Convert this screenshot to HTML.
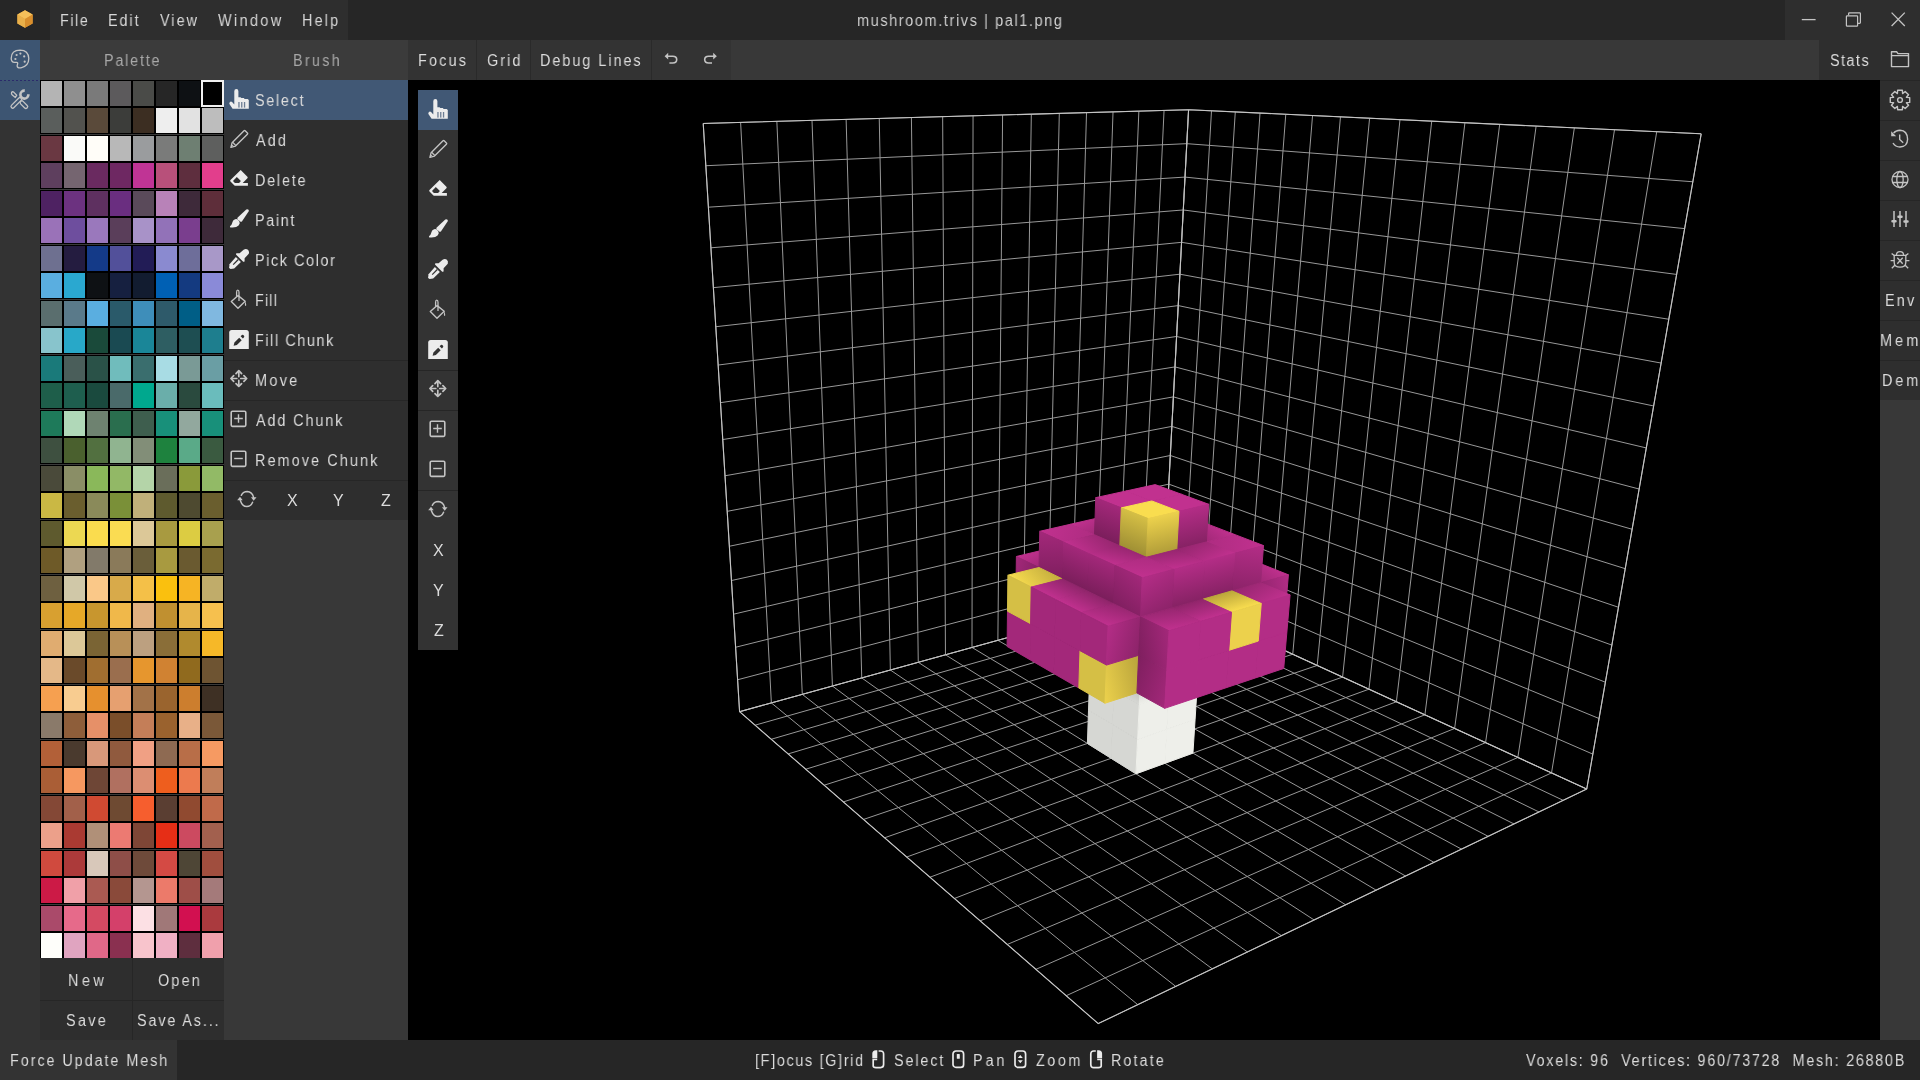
<!DOCTYPE html><html><head><meta charset="utf-8"><style>
html,body{margin:0;padding:0;width:1920px;height:1080px;overflow:hidden;background:#262626}
.t{position:absolute;font-family:"Liberation Sans",sans-serif;white-space:nowrap;will-change:transform}
.s{transform:scaleX(0.9);transform-origin:0 0;will-change:transform}
</style></head><body>
<div style="position:absolute;left:0px;top:0px;width:1920px;height:1080px;background:#262626;"></div>
<div style="position:absolute;left:50px;top:0px;width:298px;height:40px;background:#2e2e2e;"></div>
<div style="position:absolute;left:1785px;top:0px;width:135px;height:40px;background:#2e2e2e;"></div>
<div style="position:absolute;left:0px;top:40px;width:40px;height:1000px;background:#333333;"></div>
<div style="position:absolute;left:0px;top:40px;width:40px;height:80px;background:#3d5572;"></div>
<div style="position:absolute;left:0px;top:79.5px;width:40px;height:1px;background:repeating-linear-gradient(90deg,#2a2a6a 0 2px,transparent 2px 4px);"></div>
<div style="position:absolute;left:40px;top:40px;width:368px;height:40px;background:#3b3b3b;"></div>
<div style="position:absolute;left:408px;top:40px;width:1411px;height:40px;background:#333333;"></div>
<div style="position:absolute;left:731px;top:40px;width:1088px;height:40px;background:#383838;"></div>
<div style="position:absolute;left:1819px;top:40px;width:101px;height:40px;background:#2e2e2e;"></div>
<div style="position:absolute;left:40px;top:80px;width:184px;height:878px;background:#000000;"></div>
<div style="position:absolute;left:40px;top:958px;width:184px;height:82px;background:#2e2e2e;"></div>
<div style="position:absolute;left:224px;top:80px;width:184px;height:960px;background:#383838;"></div>
<div style="position:absolute;left:224px;top:80px;width:184px;height:440px;background:#2e2e2e;"></div>
<div style="position:absolute;left:224px;top:80px;width:184px;height:40px;background:#415875;"></div>
<div style="position:absolute;left:408px;top:80px;width:1472px;height:960px;background:#000000;"></div>
<div style="position:absolute;left:1880px;top:80px;width:40px;height:960px;background:#383838;"></div>
<div style="position:absolute;left:1880px;top:80px;width:40px;height:320px;background:#2e2e2e;"></div>
<div style="position:absolute;left:1880px;top:80px;width:40px;height:1px;background:#262626;"></div>
<div style="position:absolute;left:0px;top:1040px;width:1920px;height:40px;background:#262626;"></div>
<div style="position:absolute;left:0px;top:1040px;width:177px;height:40px;background:#333333;"></div>
<div style="position:absolute;left:41px;top:81px;width:21px;height:25px;background:#b4b4b4;"></div>
<div style="position:absolute;left:64px;top:81px;width:21px;height:25px;background:#8f8f8f;"></div>
<div style="position:absolute;left:87px;top:81px;width:21px;height:25px;background:#7a7a7a;"></div>
<div style="position:absolute;left:110px;top:81px;width:21px;height:25px;background:#5c5a5c;"></div>
<div style="position:absolute;left:133px;top:81px;width:21px;height:25px;background:#4a4b48;"></div>
<div style="position:absolute;left:156px;top:81px;width:21px;height:25px;background:#262626;"></div>
<div style="position:absolute;left:179px;top:81px;width:21px;height:25px;background:#0e1114;"></div>
<div style="position:absolute;left:202px;top:81px;width:21px;height:25px;background:#000000;"></div>
<div style="position:absolute;left:40px;top:134px;width:184px;height:1px;background:#3a3a3a;"></div>
<div style="position:absolute;left:41px;top:108px;width:21px;height:25px;background:#5a5e5c;"></div>
<div style="position:absolute;left:64px;top:108px;width:21px;height:25px;background:#52524e;"></div>
<div style="position:absolute;left:87px;top:108px;width:21px;height:25px;background:#5a4a3a;"></div>
<div style="position:absolute;left:110px;top:108px;width:21px;height:25px;background:#3c3d3a;"></div>
<div style="position:absolute;left:133px;top:108px;width:21px;height:25px;background:#3c2e22;"></div>
<div style="position:absolute;left:156px;top:108px;width:21px;height:25px;background:#eeeeee;"></div>
<div style="position:absolute;left:179px;top:108px;width:21px;height:25px;background:#e2e2e2;"></div>
<div style="position:absolute;left:202px;top:108px;width:21px;height:25px;background:#bdbdbd;"></div>
<div style="position:absolute;left:41px;top:136px;width:21px;height:25px;background:#6a3842;"></div>
<div style="position:absolute;left:64px;top:136px;width:21px;height:25px;background:#fafaf8;"></div>
<div style="position:absolute;left:87px;top:136px;width:21px;height:25px;background:#fffdf8;"></div>
<div style="position:absolute;left:110px;top:136px;width:21px;height:25px;background:#b8b8b8;"></div>
<div style="position:absolute;left:133px;top:136px;width:21px;height:25px;background:#9a9c9e;"></div>
<div style="position:absolute;left:156px;top:136px;width:21px;height:25px;background:#7a7b7a;"></div>
<div style="position:absolute;left:179px;top:136px;width:21px;height:25px;background:#6e7f72;"></div>
<div style="position:absolute;left:202px;top:136px;width:21px;height:25px;background:#5e5f5e;"></div>
<div style="position:absolute;left:40px;top:189px;width:184px;height:1px;background:#3a3a3a;"></div>
<div style="position:absolute;left:41px;top:163px;width:21px;height:25px;background:#5e3f5e;"></div>
<div style="position:absolute;left:64px;top:163px;width:21px;height:25px;background:#756570;"></div>
<div style="position:absolute;left:87px;top:163px;width:21px;height:25px;background:#6a2a60;"></div>
<div style="position:absolute;left:110px;top:163px;width:21px;height:25px;background:#6e2862;"></div>
<div style="position:absolute;left:133px;top:163px;width:21px;height:25px;background:#c03495;"></div>
<div style="position:absolute;left:156px;top:163px;width:21px;height:25px;background:#b8507a;"></div>
<div style="position:absolute;left:179px;top:163px;width:21px;height:25px;background:#5e2e3e;"></div>
<div style="position:absolute;left:202px;top:163px;width:21px;height:25px;background:#e23e8c;"></div>
<div style="position:absolute;left:41px;top:191px;width:21px;height:25px;background:#4e2262;"></div>
<div style="position:absolute;left:64px;top:191px;width:21px;height:25px;background:#6c3280;"></div>
<div style="position:absolute;left:87px;top:191px;width:21px;height:25px;background:#5e3060;"></div>
<div style="position:absolute;left:110px;top:191px;width:21px;height:25px;background:#6a2e80;"></div>
<div style="position:absolute;left:133px;top:191px;width:21px;height:25px;background:#5a4a5a;"></div>
<div style="position:absolute;left:156px;top:191px;width:21px;height:25px;background:#b882b8;"></div>
<div style="position:absolute;left:179px;top:191px;width:21px;height:25px;background:#3e2a3a;"></div>
<div style="position:absolute;left:202px;top:191px;width:21px;height:25px;background:#5e2e3a;"></div>
<div style="position:absolute;left:40px;top:244px;width:184px;height:1px;background:#3a3a3a;"></div>
<div style="position:absolute;left:41px;top:218px;width:21px;height:25px;background:#9a72b8;"></div>
<div style="position:absolute;left:64px;top:218px;width:21px;height:25px;background:#6e4e9e;"></div>
<div style="position:absolute;left:87px;top:218px;width:21px;height:25px;background:#9a78bc;"></div>
<div style="position:absolute;left:110px;top:218px;width:21px;height:25px;background:#5a3e5a;"></div>
<div style="position:absolute;left:133px;top:218px;width:21px;height:25px;background:#a892c8;"></div>
<div style="position:absolute;left:156px;top:218px;width:21px;height:25px;background:#9272b8;"></div>
<div style="position:absolute;left:179px;top:218px;width:21px;height:25px;background:#7a3e8e;"></div>
<div style="position:absolute;left:202px;top:218px;width:21px;height:25px;background:#3e2a3a;"></div>
<div style="position:absolute;left:41px;top:246px;width:21px;height:25px;background:#6e7090;"></div>
<div style="position:absolute;left:64px;top:246px;width:21px;height:25px;background:#241c40;"></div>
<div style="position:absolute;left:87px;top:246px;width:21px;height:25px;background:#143a88;"></div>
<div style="position:absolute;left:110px;top:246px;width:21px;height:25px;background:#52509a;"></div>
<div style="position:absolute;left:133px;top:246px;width:21px;height:25px;background:#221c56;"></div>
<div style="position:absolute;left:156px;top:246px;width:21px;height:25px;background:#8a8ad0;"></div>
<div style="position:absolute;left:179px;top:246px;width:21px;height:25px;background:#6e6e9a;"></div>
<div style="position:absolute;left:202px;top:246px;width:21px;height:25px;background:#a898c8;"></div>
<div style="position:absolute;left:40px;top:299px;width:184px;height:1px;background:#3a3a3a;"></div>
<div style="position:absolute;left:41px;top:273px;width:21px;height:25px;background:#5aaee0;"></div>
<div style="position:absolute;left:64px;top:273px;width:21px;height:25px;background:#2aa8d0;"></div>
<div style="position:absolute;left:87px;top:273px;width:21px;height:25px;background:#0e1114;"></div>
<div style="position:absolute;left:110px;top:273px;width:21px;height:25px;background:#162040;"></div>
<div style="position:absolute;left:133px;top:273px;width:21px;height:25px;background:#121c30;"></div>
<div style="position:absolute;left:156px;top:273px;width:21px;height:25px;background:#0060b4;"></div>
<div style="position:absolute;left:179px;top:273px;width:21px;height:25px;background:#143a80;"></div>
<div style="position:absolute;left:202px;top:273px;width:21px;height:25px;background:#8a8ad8;"></div>
<div style="position:absolute;left:41px;top:301px;width:21px;height:25px;background:#5a6e6e;"></div>
<div style="position:absolute;left:64px;top:301px;width:21px;height:25px;background:#5a7a8a;"></div>
<div style="position:absolute;left:87px;top:301px;width:21px;height:25px;background:#5aaee0;"></div>
<div style="position:absolute;left:110px;top:301px;width:21px;height:25px;background:#2a5a6a;"></div>
<div style="position:absolute;left:133px;top:301px;width:21px;height:25px;background:#3e8eba;"></div>
<div style="position:absolute;left:156px;top:301px;width:21px;height:25px;background:#2e5a6a;"></div>
<div style="position:absolute;left:179px;top:301px;width:21px;height:25px;background:#005e86;"></div>
<div style="position:absolute;left:202px;top:301px;width:21px;height:25px;background:#80b8e0;"></div>
<div style="position:absolute;left:40px;top:354px;width:184px;height:1px;background:#3a3a3a;"></div>
<div style="position:absolute;left:41px;top:328px;width:21px;height:25px;background:#88c4cc;"></div>
<div style="position:absolute;left:64px;top:328px;width:21px;height:25px;background:#28a8c8;"></div>
<div style="position:absolute;left:87px;top:328px;width:21px;height:25px;background:#1a4a3a;"></div>
<div style="position:absolute;left:110px;top:328px;width:21px;height:25px;background:#1a4a52;"></div>
<div style="position:absolute;left:133px;top:328px;width:21px;height:25px;background:#1a8698;"></div>
<div style="position:absolute;left:156px;top:328px;width:21px;height:25px;background:#2e5e62;"></div>
<div style="position:absolute;left:179px;top:328px;width:21px;height:25px;background:#1e4e52;"></div>
<div style="position:absolute;left:202px;top:328px;width:21px;height:25px;background:#1e7e8e;"></div>
<div style="position:absolute;left:41px;top:356px;width:21px;height:25px;background:#1a7a7a;"></div>
<div style="position:absolute;left:64px;top:356px;width:21px;height:25px;background:#4a5e5a;"></div>
<div style="position:absolute;left:87px;top:356px;width:21px;height:25px;background:#2a5248;"></div>
<div style="position:absolute;left:110px;top:356px;width:21px;height:25px;background:#70bcbc;"></div>
<div style="position:absolute;left:133px;top:356px;width:21px;height:25px;background:#3a6e6e;"></div>
<div style="position:absolute;left:156px;top:356px;width:21px;height:25px;background:#a8dce4;"></div>
<div style="position:absolute;left:179px;top:356px;width:21px;height:25px;background:#7a9a96;"></div>
<div style="position:absolute;left:202px;top:356px;width:21px;height:25px;background:#6a9ea4;"></div>
<div style="position:absolute;left:40px;top:409px;width:184px;height:1px;background:#3a3a3a;"></div>
<div style="position:absolute;left:41px;top:383px;width:21px;height:25px;background:#1e5e4a;"></div>
<div style="position:absolute;left:64px;top:383px;width:21px;height:25px;background:#1e5e4e;"></div>
<div style="position:absolute;left:87px;top:383px;width:21px;height:25px;background:#1a4a3e;"></div>
<div style="position:absolute;left:110px;top:383px;width:21px;height:25px;background:#4a6a6a;"></div>
<div style="position:absolute;left:133px;top:383px;width:21px;height:25px;background:#00a88e;"></div>
<div style="position:absolute;left:156px;top:383px;width:21px;height:25px;background:#6aaeaa;"></div>
<div style="position:absolute;left:179px;top:383px;width:21px;height:25px;background:#2a4a3e;"></div>
<div style="position:absolute;left:202px;top:383px;width:21px;height:25px;background:#6abcbc;"></div>
<div style="position:absolute;left:41px;top:411px;width:21px;height:25px;background:#1e7a5a;"></div>
<div style="position:absolute;left:64px;top:411px;width:21px;height:25px;background:#b0d8b8;"></div>
<div style="position:absolute;left:87px;top:411px;width:21px;height:25px;background:#6e8270;"></div>
<div style="position:absolute;left:110px;top:411px;width:21px;height:25px;background:#2a6e4e;"></div>
<div style="position:absolute;left:133px;top:411px;width:21px;height:25px;background:#3e5e4e;"></div>
<div style="position:absolute;left:156px;top:411px;width:21px;height:25px;background:#18907a;"></div>
<div style="position:absolute;left:179px;top:411px;width:21px;height:25px;background:#92a89e;"></div>
<div style="position:absolute;left:202px;top:411px;width:21px;height:25px;background:#18907a;"></div>
<div style="position:absolute;left:40px;top:464px;width:184px;height:1px;background:#3a3a3a;"></div>
<div style="position:absolute;left:41px;top:438px;width:21px;height:25px;background:#3e5040;"></div>
<div style="position:absolute;left:64px;top:438px;width:21px;height:25px;background:#4a602e;"></div>
<div style="position:absolute;left:87px;top:438px;width:21px;height:25px;background:#527040;"></div>
<div style="position:absolute;left:110px;top:438px;width:21px;height:25px;background:#90b490;"></div>
<div style="position:absolute;left:133px;top:438px;width:21px;height:25px;background:#828e78;"></div>
<div style="position:absolute;left:156px;top:438px;width:21px;height:25px;background:#1e823e;"></div>
<div style="position:absolute;left:179px;top:438px;width:21px;height:25px;background:#5aaa88;"></div>
<div style="position:absolute;left:202px;top:438px;width:21px;height:25px;background:#3a5a40;"></div>
<div style="position:absolute;left:41px;top:466px;width:21px;height:25px;background:#4a4a3a;"></div>
<div style="position:absolute;left:64px;top:466px;width:21px;height:25px;background:#8a8e66;"></div>
<div style="position:absolute;left:87px;top:466px;width:21px;height:25px;background:#8ab85a;"></div>
<div style="position:absolute;left:110px;top:466px;width:21px;height:25px;background:#92b866;"></div>
<div style="position:absolute;left:133px;top:466px;width:21px;height:25px;background:#b4d4a8;"></div>
<div style="position:absolute;left:156px;top:466px;width:21px;height:25px;background:#6a6e5a;"></div>
<div style="position:absolute;left:179px;top:466px;width:21px;height:25px;background:#8a9a3a;"></div>
<div style="position:absolute;left:202px;top:466px;width:21px;height:25px;background:#92ba66;"></div>
<div style="position:absolute;left:40px;top:519px;width:184px;height:1px;background:#3a3a3a;"></div>
<div style="position:absolute;left:41px;top:493px;width:21px;height:25px;background:#cab844;"></div>
<div style="position:absolute;left:64px;top:493px;width:21px;height:25px;background:#6a5e2e;"></div>
<div style="position:absolute;left:87px;top:493px;width:21px;height:25px;background:#8a8a5a;"></div>
<div style="position:absolute;left:110px;top:493px;width:21px;height:25px;background:#7a9038;"></div>
<div style="position:absolute;left:133px;top:493px;width:21px;height:25px;background:#c0b07a;"></div>
<div style="position:absolute;left:156px;top:493px;width:21px;height:25px;background:#5e5a2e;"></div>
<div style="position:absolute;left:179px;top:493px;width:21px;height:25px;background:#4e4a30;"></div>
<div style="position:absolute;left:202px;top:493px;width:21px;height:25px;background:#6a5e2e;"></div>
<div style="position:absolute;left:41px;top:521px;width:21px;height:25px;background:#5e5a2e;"></div>
<div style="position:absolute;left:64px;top:521px;width:21px;height:25px;background:#ecd852;"></div>
<div style="position:absolute;left:87px;top:521px;width:21px;height:25px;background:#fadc4e;"></div>
<div style="position:absolute;left:110px;top:521px;width:21px;height:25px;background:#fadc52;"></div>
<div style="position:absolute;left:133px;top:521px;width:21px;height:25px;background:#dcc898;"></div>
<div style="position:absolute;left:156px;top:521px;width:21px;height:25px;background:#a89a40;"></div>
<div style="position:absolute;left:179px;top:521px;width:21px;height:25px;background:#dccc42;"></div>
<div style="position:absolute;left:202px;top:521px;width:21px;height:25px;background:#a8a04e;"></div>
<div style="position:absolute;left:40px;top:574px;width:184px;height:1px;background:#3a3a3a;"></div>
<div style="position:absolute;left:41px;top:548px;width:21px;height:25px;background:#6e5a28;"></div>
<div style="position:absolute;left:64px;top:548px;width:21px;height:25px;background:#b0a080;"></div>
<div style="position:absolute;left:87px;top:548px;width:21px;height:25px;background:#827a6a;"></div>
<div style="position:absolute;left:110px;top:548px;width:21px;height:25px;background:#8a7a5a;"></div>
<div style="position:absolute;left:133px;top:548px;width:21px;height:25px;background:#6a5e3a;"></div>
<div style="position:absolute;left:156px;top:548px;width:21px;height:25px;background:#a89a40;"></div>
<div style="position:absolute;left:179px;top:548px;width:21px;height:25px;background:#6a5a30;"></div>
<div style="position:absolute;left:202px;top:548px;width:21px;height:25px;background:#7a6a30;"></div>
<div style="position:absolute;left:41px;top:576px;width:21px;height:25px;background:#6e6040;"></div>
<div style="position:absolute;left:64px;top:576px;width:21px;height:25px;background:#d0c8a8;"></div>
<div style="position:absolute;left:87px;top:576px;width:21px;height:25px;background:#fac888;"></div>
<div style="position:absolute;left:110px;top:576px;width:21px;height:25px;background:#d8aa4a;"></div>
<div style="position:absolute;left:133px;top:576px;width:21px;height:25px;background:#f4c048;"></div>
<div style="position:absolute;left:156px;top:576px;width:21px;height:25px;background:#fac00e;"></div>
<div style="position:absolute;left:179px;top:576px;width:21px;height:25px;background:#f6b424;"></div>
<div style="position:absolute;left:202px;top:576px;width:21px;height:25px;background:#c0ac6a;"></div>
<div style="position:absolute;left:40px;top:629px;width:184px;height:1px;background:#3a3a3a;"></div>
<div style="position:absolute;left:41px;top:603px;width:21px;height:25px;background:#d8a030;"></div>
<div style="position:absolute;left:64px;top:603px;width:21px;height:25px;background:#e6a828;"></div>
<div style="position:absolute;left:87px;top:603px;width:21px;height:25px;background:#c8962e;"></div>
<div style="position:absolute;left:110px;top:603px;width:21px;height:25px;background:#f0b84a;"></div>
<div style="position:absolute;left:133px;top:603px;width:21px;height:25px;background:#e0b080;"></div>
<div style="position:absolute;left:156px;top:603px;width:21px;height:25px;background:#c09030;"></div>
<div style="position:absolute;left:179px;top:603px;width:21px;height:25px;background:#e6b44a;"></div>
<div style="position:absolute;left:202px;top:603px;width:21px;height:25px;background:#f6c04e;"></div>
<div style="position:absolute;left:41px;top:631px;width:21px;height:25px;background:#e0ac70;"></div>
<div style="position:absolute;left:64px;top:631px;width:21px;height:25px;background:#dcc898;"></div>
<div style="position:absolute;left:87px;top:631px;width:21px;height:25px;background:#7a6434;"></div>
<div style="position:absolute;left:110px;top:631px;width:21px;height:25px;background:#b89058;"></div>
<div style="position:absolute;left:133px;top:631px;width:21px;height:25px;background:#bca080;"></div>
<div style="position:absolute;left:156px;top:631px;width:21px;height:25px;background:#8a6e38;"></div>
<div style="position:absolute;left:179px;top:631px;width:21px;height:25px;background:#b08a2e;"></div>
<div style="position:absolute;left:202px;top:631px;width:21px;height:25px;background:#f6b828;"></div>
<div style="position:absolute;left:40px;top:684px;width:184px;height:1px;background:#3a3a3a;"></div>
<div style="position:absolute;left:41px;top:658px;width:21px;height:25px;background:#e4b888;"></div>
<div style="position:absolute;left:64px;top:658px;width:21px;height:25px;background:#6a4a2a;"></div>
<div style="position:absolute;left:87px;top:658px;width:21px;height:25px;background:#a06e30;"></div>
<div style="position:absolute;left:110px;top:658px;width:21px;height:25px;background:#9a6e4e;"></div>
<div style="position:absolute;left:133px;top:658px;width:21px;height:25px;background:#e6962e;"></div>
<div style="position:absolute;left:156px;top:658px;width:21px;height:25px;background:#d08232;"></div>
<div style="position:absolute;left:179px;top:658px;width:21px;height:25px;background:#906a1e;"></div>
<div style="position:absolute;left:202px;top:658px;width:21px;height:25px;background:#6e5432;"></div>
<div style="position:absolute;left:41px;top:686px;width:21px;height:25px;background:#f6a050;"></div>
<div style="position:absolute;left:64px;top:686px;width:21px;height:25px;background:#f8cc90;"></div>
<div style="position:absolute;left:87px;top:686px;width:21px;height:25px;background:#e6902e;"></div>
<div style="position:absolute;left:110px;top:686px;width:21px;height:25px;background:#e6a070;"></div>
<div style="position:absolute;left:133px;top:686px;width:21px;height:25px;background:#a27248;"></div>
<div style="position:absolute;left:156px;top:686px;width:21px;height:25px;background:#9a642e;"></div>
<div style="position:absolute;left:179px;top:686px;width:21px;height:25px;background:#cc7e2e;"></div>
<div style="position:absolute;left:202px;top:686px;width:21px;height:25px;background:#3e3024;"></div>
<div style="position:absolute;left:40px;top:739px;width:184px;height:1px;background:#3a3a3a;"></div>
<div style="position:absolute;left:41px;top:713px;width:21px;height:25px;background:#8a7a6a;"></div>
<div style="position:absolute;left:64px;top:713px;width:21px;height:25px;background:#8e5e3a;"></div>
<div style="position:absolute;left:87px;top:713px;width:21px;height:25px;background:#e69068;"></div>
<div style="position:absolute;left:110px;top:713px;width:21px;height:25px;background:#7a4e2a;"></div>
<div style="position:absolute;left:133px;top:713px;width:21px;height:25px;background:#c47e58;"></div>
<div style="position:absolute;left:156px;top:713px;width:21px;height:25px;background:#9a622e;"></div>
<div style="position:absolute;left:179px;top:713px;width:21px;height:25px;background:#e8b088;"></div>
<div style="position:absolute;left:202px;top:713px;width:21px;height:25px;background:#7a5838;"></div>
<div style="position:absolute;left:41px;top:741px;width:21px;height:25px;background:#b26038;"></div>
<div style="position:absolute;left:64px;top:741px;width:21px;height:25px;background:#4a3a2e;"></div>
<div style="position:absolute;left:87px;top:741px;width:21px;height:25px;background:#d8987a;"></div>
<div style="position:absolute;left:110px;top:741px;width:21px;height:25px;background:#905a3e;"></div>
<div style="position:absolute;left:133px;top:741px;width:21px;height:25px;background:#f0a084;"></div>
<div style="position:absolute;left:156px;top:741px;width:21px;height:25px;background:#8e6a52;"></div>
<div style="position:absolute;left:179px;top:741px;width:21px;height:25px;background:#b86e48;"></div>
<div style="position:absolute;left:202px;top:741px;width:21px;height:25px;background:#f69a62;"></div>
<div style="position:absolute;left:40px;top:794px;width:184px;height:1px;background:#3a3a3a;"></div>
<div style="position:absolute;left:41px;top:768px;width:21px;height:25px;background:#aa5e36;"></div>
<div style="position:absolute;left:64px;top:768px;width:21px;height:25px;background:#f69860;"></div>
<div style="position:absolute;left:87px;top:768px;width:21px;height:25px;background:#6e4636;"></div>
<div style="position:absolute;left:110px;top:768px;width:21px;height:25px;background:#b07060;"></div>
<div style="position:absolute;left:133px;top:768px;width:21px;height:25px;background:#dc8e72;"></div>
<div style="position:absolute;left:156px;top:768px;width:21px;height:25px;background:#ee5e1e;"></div>
<div style="position:absolute;left:179px;top:768px;width:21px;height:25px;background:#ec7a4e;"></div>
<div style="position:absolute;left:202px;top:768px;width:21px;height:25px;background:#c07e5a;"></div>
<div style="position:absolute;left:41px;top:796px;width:21px;height:25px;background:#844836;"></div>
<div style="position:absolute;left:64px;top:796px;width:21px;height:25px;background:#a2604a;"></div>
<div style="position:absolute;left:87px;top:796px;width:21px;height:25px;background:#d04a32;"></div>
<div style="position:absolute;left:110px;top:796px;width:21px;height:25px;background:#6e4a32;"></div>
<div style="position:absolute;left:133px;top:796px;width:21px;height:25px;background:#f65e2e;"></div>
<div style="position:absolute;left:156px;top:796px;width:21px;height:25px;background:#5a3e32;"></div>
<div style="position:absolute;left:179px;top:796px;width:21px;height:25px;background:#904a30;"></div>
<div style="position:absolute;left:202px;top:796px;width:21px;height:25px;background:#c06a4a;"></div>
<div style="position:absolute;left:40px;top:849px;width:184px;height:1px;background:#3a3a3a;"></div>
<div style="position:absolute;left:41px;top:823px;width:21px;height:25px;background:#eca08a;"></div>
<div style="position:absolute;left:64px;top:823px;width:21px;height:25px;background:#aa3a32;"></div>
<div style="position:absolute;left:87px;top:823px;width:21px;height:25px;background:#b09078;"></div>
<div style="position:absolute;left:110px;top:823px;width:21px;height:25px;background:#ec7a72;"></div>
<div style="position:absolute;left:133px;top:823px;width:21px;height:25px;background:#7e4636;"></div>
<div style="position:absolute;left:156px;top:823px;width:21px;height:25px;background:#e62e16;"></div>
<div style="position:absolute;left:179px;top:823px;width:21px;height:25px;background:#cc4a60;"></div>
<div style="position:absolute;left:202px;top:823px;width:21px;height:25px;background:#a2604e;"></div>
<div style="position:absolute;left:41px;top:851px;width:21px;height:25px;background:#d04a3e;"></div>
<div style="position:absolute;left:64px;top:851px;width:21px;height:25px;background:#ac3a3a;"></div>
<div style="position:absolute;left:87px;top:851px;width:21px;height:25px;background:#d8c8ba;"></div>
<div style="position:absolute;left:110px;top:851px;width:21px;height:25px;background:#8e4e48;"></div>
<div style="position:absolute;left:133px;top:851px;width:21px;height:25px;background:#6e4a3a;"></div>
<div style="position:absolute;left:156px;top:851px;width:21px;height:25px;background:#d44a44;"></div>
<div style="position:absolute;left:179px;top:851px;width:21px;height:25px;background:#4e4636;"></div>
<div style="position:absolute;left:202px;top:851px;width:21px;height:25px;background:#a04e3e;"></div>
<div style="position:absolute;left:40px;top:904px;width:184px;height:1px;background:#3a3a3a;"></div>
<div style="position:absolute;left:41px;top:878px;width:21px;height:25px;background:#cc1a46;"></div>
<div style="position:absolute;left:64px;top:878px;width:21px;height:25px;background:#f0a0a8;"></div>
<div style="position:absolute;left:87px;top:878px;width:21px;height:25px;background:#aa5a52;"></div>
<div style="position:absolute;left:110px;top:878px;width:21px;height:25px;background:#8a4a3a;"></div>
<div style="position:absolute;left:133px;top:878px;width:21px;height:25px;background:#b49690;"></div>
<div style="position:absolute;left:156px;top:878px;width:21px;height:25px;background:#ec7a6a;"></div>
<div style="position:absolute;left:179px;top:878px;width:21px;height:25px;background:#9e4e48;"></div>
<div style="position:absolute;left:202px;top:878px;width:21px;height:25px;background:#a47a7a;"></div>
<div style="position:absolute;left:41px;top:906px;width:21px;height:25px;background:#aa4a6a;"></div>
<div style="position:absolute;left:64px;top:906px;width:21px;height:25px;background:#e66a8a;"></div>
<div style="position:absolute;left:87px;top:906px;width:21px;height:25px;background:#d44a62;"></div>
<div style="position:absolute;left:110px;top:906px;width:21px;height:25px;background:#d4406a;"></div>
<div style="position:absolute;left:133px;top:906px;width:21px;height:25px;background:#fce0e4;"></div>
<div style="position:absolute;left:156px;top:906px;width:21px;height:25px;background:#a07878;"></div>
<div style="position:absolute;left:179px;top:906px;width:21px;height:25px;background:#d21050;"></div>
<div style="position:absolute;left:202px;top:906px;width:21px;height:25px;background:#aa3a3e;"></div>
<div style="position:absolute;left:41px;top:933px;width:21px;height:25px;background:#fefefa;"></div>
<div style="position:absolute;left:64px;top:933px;width:21px;height:25px;background:#e0a4c0;"></div>
<div style="position:absolute;left:87px;top:933px;width:21px;height:25px;background:#e06888;"></div>
<div style="position:absolute;left:110px;top:933px;width:21px;height:25px;background:#8a3050;"></div>
<div style="position:absolute;left:133px;top:933px;width:21px;height:25px;background:#f8c4cc;"></div>
<div style="position:absolute;left:156px;top:933px;width:21px;height:25px;background:#f0b0c4;"></div>
<div style="position:absolute;left:179px;top:933px;width:21px;height:25px;background:#5e2e3e;"></div>
<div style="position:absolute;left:202px;top:933px;width:21px;height:25px;background:#f0a0ac;"></div>
<div style="position:absolute;left:201px;top:80px;width:23px;height:27px;background:transparent;box-sizing:border-box;border:2px solid #f0f0f0"></div>
<div style="position:absolute;left:132px;top:958px;width:1px;height:82px;background:#262626;"></div>
<div style="position:absolute;left:40px;top:1000px;width:184px;height:1px;background:#262626;"></div>
<div class="t s" style="left:68px;top:973.3px;font-size:16px;line-height:16px;letter-spacing:3.889px;color:#dcdcdc;">New</div>
<div class="t s" style="left:157.5px;top:973.3px;font-size:16px;line-height:16px;letter-spacing:2.407px;color:#dcdcdc;">Open</div>
<div class="t s" style="left:66px;top:1012.8px;font-size:16px;line-height:16px;letter-spacing:2.593px;color:#dcdcdc;">Save</div>
<div class="t s" style="left:137px;top:1012.8px;font-size:16px;line-height:16px;letter-spacing:2.062px;color:#dcdcdc;">Save As...</div>
<div class="t s" style="left:60px;top:12.5px;font-size:16px;line-height:16px;letter-spacing:1.667px;color:#d8d8d8;">File</div>
<div class="t s" style="left:108px;top:12.5px;font-size:16px;line-height:16px;letter-spacing:2.130px;color:#d8d8d8;">Edit</div>
<div class="t s" style="left:159.5px;top:12.5px;font-size:16px;line-height:16px;letter-spacing:2.222px;color:#d8d8d8;">View</div>
<div class="t s" style="left:218px;top:12.5px;font-size:16px;line-height:16px;letter-spacing:2.667px;color:#d8d8d8;">Window</div>
<div class="t s" style="left:302px;top:12.5px;font-size:16px;line-height:16px;letter-spacing:2.407px;color:#d8d8d8;">Help</div>
<div class="t s" style="left:856.5px;top:12.5px;font-size:16px;line-height:16px;letter-spacing:1.829px;color:#d0d0d0;">mushroom.trivs | pal1.png</div>
<div class="t s" style="left:104px;top:52.9px;font-size:16px;line-height:16px;letter-spacing:1.991px;color:#a8a8a8;">Palette</div>
<div class="t s" style="left:292.75px;top:52.9px;font-size:16px;line-height:16px;letter-spacing:2.500px;color:#a8a8a8;">Brush</div>
<div style="position:absolute;left:476px;top:40px;width:1px;height:40px;background:#2a2a2a;"></div>
<div style="position:absolute;left:530px;top:40px;width:1px;height:40px;background:#2a2a2a;"></div>
<div style="position:absolute;left:651px;top:40px;width:1px;height:40px;background:#2a2a2a;"></div>
<div class="t s" style="left:417.75px;top:52.599999999999994px;font-size:16px;line-height:16px;letter-spacing:2.431px;color:#dcdcdc;">Focus</div>
<div class="t s" style="left:486.6px;top:52.599999999999994px;font-size:16px;line-height:16px;letter-spacing:2.296px;color:#dcdcdc;">Grid</div>
<div class="t s" style="left:540px;top:52.599999999999994px;font-size:16px;line-height:16px;letter-spacing:2.200px;color:#dcdcdc;">Debug Lines</div>
<div class="t s" style="left:1829.6px;top:52.9px;font-size:16px;line-height:16px;letter-spacing:1.611px;color:#dcdcdc;">Stats</div>
<div class="t s" style="left:254.5px;top:93.2px;font-size:16px;line-height:16px;letter-spacing:1.889px;color:#dcdcdc;">Select</div>
<div class="t s" style="left:255.5px;top:133.20000000000002px;font-size:16px;line-height:16px;letter-spacing:2.389px;color:#dcdcdc;">Add</div>
<div class="t s" style="left:254.5px;top:173.20000000000002px;font-size:16px;line-height:16px;letter-spacing:1.956px;color:#dcdcdc;">Delete</div>
<div class="t s" style="left:254.5px;top:213.20000000000002px;font-size:16px;line-height:16px;letter-spacing:1.806px;color:#dcdcdc;">Paint</div>
<div class="t s" style="left:254.5px;top:253.20000000000002px;font-size:16px;line-height:16px;letter-spacing:1.765px;color:#dcdcdc;">Pick Color</div>
<div class="t s" style="left:254.5px;top:293.2px;font-size:16px;line-height:16px;letter-spacing:1.259px;color:#dcdcdc;">Fill</div>
<div class="t s" style="left:254.5px;top:333.2px;font-size:16px;line-height:16px;letter-spacing:1.765px;color:#dcdcdc;">Fill Chunk</div>
<div class="t s" style="left:254.5px;top:373.2px;font-size:16px;line-height:16px;letter-spacing:2.630px;color:#dcdcdc;">Move</div>
<div class="t s" style="left:255.5px;top:413.2px;font-size:16px;line-height:16px;letter-spacing:2.111px;color:#dcdcdc;">Add Chunk</div>
<div class="t s" style="left:254.5px;top:453.2px;font-size:16px;line-height:16px;letter-spacing:2.333px;color:#dcdcdc;">Remove Chunk</div>
<div style="position:absolute;left:224px;top:360px;width:184px;height:1px;background:#262626;"></div>
<div style="position:absolute;left:224px;top:400px;width:184px;height:1px;background:#262626;"></div>
<div style="position:absolute;left:224px;top:480px;width:184px;height:1px;background:#262626;"></div>
<div class="t" style="left:287px;top:493.2px;font-size:16px;line-height:16px;letter-spacing:0.9px;color:#dcdcdc;">X</div>
<div class="t" style="left:333px;top:493.2px;font-size:16px;line-height:16px;letter-spacing:0.9px;color:#dcdcdc;">Y</div>
<div class="t" style="left:380.5px;top:493.2px;font-size:16px;line-height:16px;letter-spacing:0.9px;color:#dcdcdc;">Z</div>
<div class="t s" style="left:9.9px;top:1053.3px;font-size:16px;line-height:16px;letter-spacing:2.139px;color:#dcdcdc;">Force Update Mesh</div>
<div class="t s" style="left:1526px;top:1053.3px;font-size:16px;line-height:16px;letter-spacing:1.912px;color:#dcdcdc;">Voxels: 96&nbsp; Vertices: 960/73728&nbsp; Mesh: 26880B</div>
<div class="t s" style="left:755px;top:1052.8px;font-size:16px;line-height:16px;letter-spacing:1.855px;color:#dcdcdc;">[F]ocus [G]rid</div>
<div class="t s" style="left:893.8px;top:1052.8px;font-size:16px;line-height:16px;letter-spacing:2.044px;color:#dcdcdc;">Select</div>
<div class="t s" style="left:973px;top:1052.8px;font-size:16px;line-height:16px;letter-spacing:3.222px;color:#dcdcdc;">Pan</div>
<div class="t s" style="left:1035.9px;top:1052.8px;font-size:16px;line-height:16px;letter-spacing:2.778px;color:#dcdcdc;">Zoom</div>
<div class="t s" style="left:1110.6px;top:1052.8px;font-size:16px;line-height:16px;letter-spacing:2.311px;color:#dcdcdc;">Rotate</div>
<div style="position:absolute;left:1880px;top:120px;width:40px;height:1px;background:#262626;"></div>
<div style="position:absolute;left:1880px;top:160px;width:40px;height:1px;background:#262626;"></div>
<div style="position:absolute;left:1880px;top:200px;width:40px;height:1px;background:#262626;"></div>
<div style="position:absolute;left:1880px;top:240px;width:40px;height:1px;background:#262626;"></div>
<div style="position:absolute;left:1880px;top:280px;width:40px;height:1px;background:#262626;"></div>
<div style="position:absolute;left:1880px;top:320px;width:40px;height:1px;background:#262626;"></div>
<div style="position:absolute;left:1880px;top:360px;width:40px;height:1px;background:#262626;"></div>
<div class="t s" style="left:1885.4px;top:293.3px;font-size:16px;line-height:16px;letter-spacing:2.444px;color:#dcdcdc;">Env</div>
<div class="t s" style="left:1880.4px;top:333.3px;font-size:16px;line-height:16px;letter-spacing:3.500px;color:#dcdcdc;">Mem</div>
<div class="t s" style="left:1881.6px;top:373.3px;font-size:16px;line-height:16px;letter-spacing:3.278px;color:#dcdcdc;">Dem</div>
<div style="position:absolute;left:408px;top:80px;width:1472px;height:960px;overflow:hidden"><div style="position:absolute;left:-408px;top:-80px"><svg style="position:absolute;left:0;top:0" width="1920" height="1080" viewBox="0 0 1920 1080"><path d="M1162.97 594.67L1188.58 109.72M1162.97 594.67L739.59 711.68M1162.97 594.67L1188.58 109.72M1162.97 594.67L1586.72 789.07M1162.97 594.67L1586.72 789.07M1162.97 594.67L739.59 711.68M1140.98 600.75L1164.05 110.42M1164.39 567.64L737.61 679.75M1182.78 603.76L1211.50 110.80M1164.39 567.64L1592.82 754.14M1140.98 600.75L1563.23 800.35M1182.78 603.76L755.11 725.18M1118.49 606.97L1138.87 111.13M1165.84 540.21L735.60 647.26M1203.28 613.16L1235.29 111.92M1165.84 540.21L1599.05 718.52M1118.49 606.97L1539.01 811.98M1203.28 613.16L771.29 739.25M1095.48 613.32L1113.04 111.86M1167.31 512.38L733.56 614.19M1224.48 622.89L1260.03 113.08M1167.31 512.38L1605.40 682.18M1095.48 613.32L1514.02 823.98M1224.48 622.89L788.15 753.92M1071.93 619.83L1086.53 112.61M1168.81 484.14L731.48 580.53M1246.44 632.96L1285.77 114.29M1168.81 484.14L1611.87 645.12M1071.93 619.83L1488.22 836.37M1246.44 632.96L805.75 769.23M1047.83 626.49L1059.30 113.38M1170.32 455.48L729.36 546.25M1269.18 643.40L1312.56 115.55M1170.32 455.48L1618.48 607.29M1047.83 626.49L1461.58 849.16M1269.18 643.40L824.14 785.22M1023.15 633.31L1031.33 114.17M1171.86 426.40L727.20 511.34M1292.76 654.21L1340.47 116.86M1171.86 426.40L1625.22 568.69M1023.15 633.31L1434.05 862.38M1292.76 654.21L843.37 801.94M997.88 640.30L1002.60 114.98M1173.42 396.87L725.00 475.78M1317.22 665.43L1369.59 118.23M1173.42 396.87L1632.11 529.28M997.88 640.30L1405.59 876.05M1317.22 665.43L863.50 819.45M971.99 647.45L973.05 115.82M1175.00 366.90L722.76 439.56M1342.61 677.08L1399.98 119.66M1175.00 366.90L1639.14 489.04M971.99 647.45L1376.15 890.18M1342.61 677.08L884.59 837.79M945.46 654.78L942.67 116.68M1176.61 336.47L720.48 402.66M1368.98 689.18L1431.73 121.15M1176.61 336.47L1646.32 447.95M945.46 654.78L1345.68 904.82M1368.98 689.18L906.72 857.03M918.26 662.30L911.42 117.56M1178.24 305.58L718.15 365.05M1396.40 701.76L1464.93 122.71M1178.24 305.58L1653.65 405.97M918.26 662.30L1314.12 919.97M1396.40 701.76L929.95 877.24M890.37 670.01L879.25 118.47M1179.90 274.20L715.78 326.72M1424.92 714.84L1499.69 124.34M1179.90 274.20L1661.15 363.07M890.37 670.01L1281.41 935.68M1424.92 714.84L954.39 898.49M861.76 677.91L846.13 119.41M1181.58 242.33L713.37 287.65M1454.62 728.46L1536.12 126.05M1181.58 242.33L1668.80 319.24M861.76 677.91L1247.49 951.97M1454.62 728.46L980.12 920.87M832.41 686.03L812.01 120.37M1183.29 209.96L710.90 247.81M1485.56 742.66L1574.35 127.85M1183.29 209.96L1676.63 274.43M832.41 686.03L1212.30 968.87M1485.56 742.66L1007.25 944.46M802.29 694.35L776.85 121.37M1185.03 177.08L708.39 207.18M1517.83 757.46L1614.50 129.74M1185.03 177.08L1684.64 228.61M802.29 694.35L1175.75 986.42M1517.83 757.46L1035.89 969.37M771.36 702.90L740.61 122.39M1186.79 143.67L705.83 165.73M1551.52 772.92L1656.73 131.72M1186.79 143.67L1692.82 181.75M771.36 702.90L1137.77 1004.66M1551.52 772.92L1066.19 995.72M739.59 711.68L703.22 123.45M1188.58 109.72L703.22 123.45M1586.72 789.07L1701.20 133.81M1188.58 109.72L1701.20 133.81M739.59 711.68L1098.27 1023.62M1586.72 789.07L1098.27 1023.62" stroke="#989898" stroke-width="1" fill="none"/><path d="M1188.58 109.72L703.22 123.45M703.22 123.45L739.59 711.68M1188.58 109.72L1701.20 133.81M1701.20 133.81L1586.72 789.07M739.59 711.68L1098.27 1023.62M1098.27 1023.62L1586.72 789.07M1162.97 594.67L1188.58 109.72M1162.97 594.67L739.59 711.68M1162.97 594.67L1586.72 789.07" stroke="#c4c4c4" stroke-width="1.1" fill="none"/><defs><linearGradient id="g0" gradientUnits="userSpaceOnUse" x1="1128.39" y1="529.35" x2="1130.02" y2="545.47"><stop offset="0" stop-color="#c1318f"/><stop offset="1" stop-color="#96266f"/></linearGradient><linearGradient id="g1" gradientUnits="userSpaceOnUse" x1="1182.72" y1="532.46" x2="1178.78" y2="548.97"><stop offset="0" stop-color="#c1318f"/><stop offset="1" stop-color="#96266f"/></linearGradient><linearGradient id="g2" gradientUnits="userSpaceOnUse" x1="1099.37" y1="536.57" x2="1103.05" y2="551.73"><stop offset="0" stop-color="#c1318f"/><stop offset="1" stop-color="#91256b"/></linearGradient><linearGradient id="g3" gradientUnits="userSpaceOnUse" x1="1209.36" y1="543.07" x2="1202.94" y2="558.84"><stop offset="0" stop-color="#c1318f"/><stop offset="1" stop-color="#90256b"/></linearGradient><linearGradient id="g4" gradientUnits="userSpaceOnUse" x1="1155.55" y1="504.42" x2="1154.55" y2="520.87"><stop offset="0" stop-color="#c1318f"/><stop offset="1" stop-color="#ae2c81"/></linearGradient><linearGradient id="g5" gradientUnits="userSpaceOnUse" x1="1070.54" y1="543.46" x2="1074.27" y2="558.84"><stop offset="0" stop-color="#c1318f"/><stop offset="1" stop-color="#91256b"/></linearGradient><linearGradient id="g6" gradientUnits="userSpaceOnUse" x1="1235.92" y1="553.67" x2="1229.36" y2="569.79"><stop offset="0" stop-color="#c1318f"/><stop offset="1" stop-color="#90256b"/></linearGradient><linearGradient id="g7" gradientUnits="userSpaceOnUse" x1="1013.94" y1="616.65" x2="1039.90" y2="612.27"><stop offset="0" stop-color="#a3287a"/><stop offset="1" stop-color="#7f1f5f"/></linearGradient><linearGradient id="g8" gradientUnits="userSpaceOnUse" x1="1125.79" y1="511.18" x2="1127.37" y2="527.40"><stop offset="0" stop-color="#c1318f"/><stop offset="1" stop-color="#96266f"/></linearGradient><linearGradient id="g9" gradientUnits="userSpaceOnUse" x1="1182.38" y1="514.28" x2="1178.55" y2="530.96"><stop offset="0" stop-color="#c1318f"/><stop offset="1" stop-color="#96266f"/></linearGradient><linearGradient id="g10" gradientUnits="userSpaceOnUse" x1="1037.30" y1="546.67" x2="1048.22" y2="569.93"><stop offset="0" stop-color="#c1318f"/><stop offset="1" stop-color="#972670"/></linearGradient><linearGradient id="g11" gradientUnits="userSpaceOnUse" x1="1284.97" y1="637.24" x2="1255.03" y2="628.16"><stop offset="0" stop-color="#b32d86"/><stop offset="1" stop-color="#8b2368"/></linearGradient><linearGradient id="g12" gradientUnits="userSpaceOnUse" x1="1011.69" y1="575.82" x2="1043.11" y2="583.47"><stop offset="0" stop-color="#a3287a"/><stop offset="1" stop-color="#7f1f5f"/></linearGradient><linearGradient id="g13" gradientUnits="userSpaceOnUse" x1="1094.80" y1="679.67" x2="1109.89" y2="652.09"><stop offset="0" stop-color="#d6d7d3"/><stop offset="1" stop-color="#a0a19e"/></linearGradient><linearGradient id="g14" gradientUnits="userSpaceOnUse" x1="1268.91" y1="560.90" x2="1251.80" y2="584.87"><stop offset="0" stop-color="#c1318f"/><stop offset="1" stop-color="#972670"/></linearGradient><linearGradient id="g15" gradientUnits="userSpaceOnUse" x1="1189.12" y1="688.21" x2="1179.08" y2="656.79"><stop offset="0" stop-color="#eeefea"/><stop offset="1" stop-color="#b2b3af"/></linearGradient><linearGradient id="g16" gradientUnits="userSpaceOnUse" x1="1291.65" y1="593.74" x2="1254.50" y2="600.11"><stop offset="0" stop-color="#b32d86"/><stop offset="1" stop-color="#8c2369"/></linearGradient><linearGradient id="g17" gradientUnits="userSpaceOnUse" x1="1091.83" y1="514.32" x2="1102.67" y2="537.75"><stop offset="0" stop-color="#c1318f"/><stop offset="1" stop-color="#972670"/></linearGradient><linearGradient id="g18" gradientUnits="userSpaceOnUse" x1="1215.63" y1="520.84" x2="1198.58" y2="544.83"><stop offset="0" stop-color="#c1318f"/><stop offset="1" stop-color="#972670"/></linearGradient><linearGradient id="g19" gradientUnits="userSpaceOnUse" x1="1119.56" y1="693.63" x2="1134.99" y2="665.42"><stop offset="0" stop-color="#d6d7d3"/><stop offset="1" stop-color="#a0a19e"/></linearGradient><linearGradient id="g20" gradientUnits="userSpaceOnUse" x1="1160.09" y1="697.76" x2="1149.89" y2="665.86"><stop offset="0" stop-color="#eeefea"/><stop offset="1" stop-color="#b2b3af"/></linearGradient><linearGradient id="g21" gradientUnits="userSpaceOnUse" x1="1042.48" y1="523.95" x2="1091.74" y2="542.20"><stop offset="0" stop-color="#c1318f"/><stop offset="1" stop-color="#ae2c81"/></linearGradient><linearGradient id="g22" gradientUnits="userSpaceOnUse" x1="1050.78" y1="531.13" x2="1051.53" y2="579.20"><stop offset="0" stop-color="#a3287a"/><stop offset="1" stop-color="#7f1f5f"/></linearGradient><linearGradient id="g23" gradientUnits="userSpaceOnUse" x1="1263.57" y1="544.32" x2="1206.34" y2="543.19"><stop offset="0" stop-color="#c1318f"/><stop offset="1" stop-color="#ae2c81"/></linearGradient><linearGradient id="g24" gradientUnits="userSpaceOnUse" x1="1021.95" y1="589.83" x2="1048.55" y2="564.29"><stop offset="0" stop-color="#f9dd4f"/><stop offset="1" stop-color="#c2ac3e"/></linearGradient><linearGradient id="g25" gradientUnits="userSpaceOnUse" x1="1251.21" y1="543.86" x2="1244.39" y2="592.61"><stop offset="0" stop-color="#b32d86"/><stop offset="1" stop-color="#8b2368"/></linearGradient><linearGradient id="g26" gradientUnits="userSpaceOnUse" x1="1270.13" y1="607.51" x2="1251.81" y2="578.39"><stop offset="0" stop-color="#c1318f"/><stop offset="1" stop-color="#96266f"/></linearGradient><linearGradient id="g27" gradientUnits="userSpaceOnUse" x1="1114.58" y1="505.05" x2="1100.90" y2="537.89"><stop offset="0" stop-color="#a3287a"/><stop offset="1" stop-color="#7a1e5b"/></linearGradient><linearGradient id="g28" gradientUnits="userSpaceOnUse" x1="1188.45" y1="509.00" x2="1197.16" y2="544.48"><stop offset="0" stop-color="#b32d86"/><stop offset="1" stop-color="#862264"/></linearGradient><linearGradient id="g29" gradientUnits="userSpaceOnUse" x1="1080.37" y1="556.77" x2="1102.98" y2="531.00"><stop offset="0" stop-color="#c1318f"/><stop offset="1" stop-color="#96266f"/></linearGradient><linearGradient id="g30" gradientUnits="userSpaceOnUse" x1="1082.87" y1="550.70" x2="1068.16" y2="582.02"><stop offset="0" stop-color="#a3287a"/><stop offset="1" stop-color="#7a1e5b"/></linearGradient><linearGradient id="g31" gradientUnits="userSpaceOnUse" x1="1213.08" y1="565.01" x2="1198.23" y2="537.79"><stop offset="0" stop-color="#c1318f"/><stop offset="1" stop-color="#96266f"/></linearGradient><linearGradient id="g32" gradientUnits="userSpaceOnUse" x1="1054.35" y1="598.85" x2="1064.03" y2="579.42"><stop offset="0" stop-color="#c1318f"/><stop offset="1" stop-color="#90256b"/></linearGradient><linearGradient id="g33" gradientUnits="userSpaceOnUse" x1="1213.79" y1="558.68" x2="1223.36" y2="593.53"><stop offset="0" stop-color="#b32d86"/><stop offset="1" stop-color="#862264"/></linearGradient><linearGradient id="g34" gradientUnits="userSpaceOnUse" x1="1234.64" y1="611.36" x2="1228.91" y2="591.60"><stop offset="0" stop-color="#f9dd4f"/><stop offset="1" stop-color="#bba63b"/></linearGradient><linearGradient id="g35" gradientUnits="userSpaceOnUse" x1="1140.80" y1="515.51" x2="1126.80" y2="549.12"><stop offset="0" stop-color="#d5bf45"/><stop offset="1" stop-color="#9f8f34"/></linearGradient><linearGradient id="g36" gradientUnits="userSpaceOnUse" x1="1158.24" y1="516.12" x2="1167.08" y2="552.16"><stop offset="0" stop-color="#ecd14c"/><stop offset="1" stop-color="#b19d39"/></linearGradient><linearGradient id="g37" gradientUnits="userSpaceOnUse" x1="1114.87" y1="565.27" x2="1119.82" y2="545.77"><stop offset="0" stop-color="#c1318f"/><stop offset="1" stop-color="#972670"/></linearGradient><linearGradient id="g38" gradientUnits="userSpaceOnUse" x1="1176.54" y1="569.02" x2="1174.47" y2="549.73"><stop offset="0" stop-color="#c1318f"/><stop offset="1" stop-color="#972670"/></linearGradient><linearGradient id="g39" gradientUnits="userSpaceOnUse" x1="1108.49" y1="562.28" x2="1093.44" y2="594.33"><stop offset="0" stop-color="#a3287a"/><stop offset="1" stop-color="#7a1e5b"/></linearGradient><linearGradient id="g40" gradientUnits="userSpaceOnUse" x1="1183.57" y1="566.68" x2="1193.30" y2="602.08"><stop offset="0" stop-color="#b32d86"/><stop offset="1" stop-color="#862264"/></linearGradient><linearGradient id="g41" gradientUnits="userSpaceOnUse" x1="1079.38" y1="611.60" x2="1089.28" y2="591.71"><stop offset="0" stop-color="#c1318f"/><stop offset="1" stop-color="#90256b"/></linearGradient><linearGradient id="g42" gradientUnits="userSpaceOnUse" x1="1204.55" y1="620.26" x2="1198.73" y2="600.18"><stop offset="0" stop-color="#c1318f"/><stop offset="1" stop-color="#91256b"/></linearGradient><linearGradient id="g43" gradientUnits="userSpaceOnUse" x1="1100.43" y1="684.43" x2="1143.25" y2="673.95"><stop offset="0" stop-color="#ecd14c"/><stop offset="1" stop-color="#b8a33b"/></linearGradient><linearGradient id="g44" gradientUnits="userSpaceOnUse" x1="1143.66" y1="577.78" x2="1145.06" y2="557.16"><stop offset="0" stop-color="#c1318f"/><stop offset="1" stop-color="#ae2c81"/></linearGradient><linearGradient id="g45" gradientUnits="userSpaceOnUse" x1="1171.29" y1="688.00" x2="1132.19" y2="675.34"><stop offset="0" stop-color="#a3287a"/><stop offset="1" stop-color="#7f1f5f"/></linearGradient><linearGradient id="g46" gradientUnits="userSpaceOnUse" x1="1141.08" y1="576.51" x2="1114.56" y2="604.82"><stop offset="0" stop-color="#a3287a"/><stop offset="1" stop-color="#7f1f5f"/></linearGradient><linearGradient id="g47" gradientUnits="userSpaceOnUse" x1="1145.88" y1="575.39" x2="1168.52" y2="610.19"><stop offset="0" stop-color="#b32d86"/><stop offset="1" stop-color="#8c2369"/></linearGradient><linearGradient id="g48" gradientUnits="userSpaceOnUse" x1="1107.50" y1="626.01" x2="1113.81" y2="603.82"><stop offset="0" stop-color="#c1318f"/><stop offset="1" stop-color="#972670"/></linearGradient><linearGradient id="g49" gradientUnits="userSpaceOnUse" x1="1171.85" y1="630.42" x2="1169.20" y2="608.28"><stop offset="0" stop-color="#c1318f"/><stop offset="1" stop-color="#972670"/></linearGradient><linearGradient id="g50" gradientUnits="userSpaceOnUse" x1="1105.26" y1="635.71" x2="1141.34" y2="645.99"><stop offset="0" stop-color="#b32d86"/><stop offset="1" stop-color="#8c2369"/></linearGradient><linearGradient id="g51" gradientUnits="userSpaceOnUse" x1="1170.54" y1="640.51" x2="1137.17" y2="645.88"><stop offset="0" stop-color="#a3287a"/><stop offset="1" stop-color="#7f1f5f"/></linearGradient></defs><path d="M1131.15 529.07L1103.65 535.64L1127.17 545.76L1154.90 538.92Z" fill="url(#g0)" stroke="url(#g0)" stroke-width="1" stroke-linejoin="round"/><path d="M1181.87 532.26L1154.90 538.92L1179.66 549.17L1206.84 542.24Z" fill="url(#g1)" stroke="url(#g1)" stroke-width="1" stroke-linejoin="round"/><path d="M1103.65 535.64L1075.38 542.39L1098.63 552.80L1127.17 545.76Z" fill="url(#g2)" stroke="url(#g2)" stroke-width="1" stroke-linejoin="round"/><path d="M1206.84 542.24L1179.66 549.17L1205.48 559.87L1232.88 552.63Z" fill="url(#g3)" stroke="url(#g3)" stroke-width="1" stroke-linejoin="round"/><path d="M1156.62 504.49L1128.66 510.90L1153.44 520.80L1181.64 514.11Z" fill="url(#g4)" stroke="url(#g4)" stroke-width="1" stroke-linejoin="round"/><path d="M1087.38 743.45L1088.51 710.27L1112.52 724.54L1111.14 758.30Z" fill="#d6d7d3" stroke="#d6d7d3" stroke-width="1" stroke-linejoin="round"/><path d="M1192.96 753.10L1164.87 763.29L1166.77 729.34L1195.09 719.54Z" fill="#eeefea" stroke="#eeefea" stroke-width="1" stroke-linejoin="round"/><path d="M1075.38 542.39L1046.31 549.34L1069.27 560.05L1098.63 552.80Z" fill="url(#g5)" stroke="url(#g5)" stroke-width="1" stroke-linejoin="round"/><path d="M1232.88 552.63L1205.48 559.87L1232.45 571.05L1260.04 563.49Z" fill="url(#g6)" stroke="url(#g6)" stroke-width="1" stroke-linejoin="round"/><path d="M1015.45 625.60L1015.92 591.36L1038.34 603.04L1037.65 637.91Z" fill="url(#g7)" stroke="url(#g7)" stroke-width="1" stroke-linejoin="round"/><path d="M1088.51 710.27L1089.66 676.48L1113.93 690.14L1112.52 724.54Z" fill="#d6d7d3" stroke="#d6d7d3" stroke-width="1" stroke-linejoin="round"/><path d="M1195.09 719.54L1166.77 729.34L1168.70 694.74L1197.26 685.36Z" fill="#eeefea" stroke="#eeefea" stroke-width="1" stroke-linejoin="round"/><path d="M1128.66 510.90L1099.88 517.50L1124.40 527.69L1153.44 520.80Z" fill="url(#g8)" stroke="url(#g8)" stroke-width="1" stroke-linejoin="round"/><path d="M1181.64 514.11L1153.44 520.80L1179.32 531.14L1207.75 524.14Z" fill="url(#g9)" stroke="url(#g9)" stroke-width="1" stroke-linejoin="round"/><path d="M1111.14 758.30L1112.52 724.54L1137.60 739.44L1135.95 773.79Z" fill="#d6d7d3" stroke="#d6d7d3" stroke-width="1" stroke-linejoin="round"/><path d="M1046.31 549.34L1016.40 556.48L1039.04 567.51L1069.27 560.05Z" fill="url(#g10)" stroke="url(#g10)" stroke-width="1" stroke-linejoin="round"/><path d="M1282.30 646.04L1254.96 654.85L1257.76 619.14L1285.33 610.77Z" fill="url(#g11)" stroke="url(#g11)" stroke-width="1" stroke-linejoin="round"/><path d="M1164.87 763.29L1135.95 773.79L1137.60 739.44L1166.77 729.34Z" fill="#eeefea" stroke="#eeefea" stroke-width="1" stroke-linejoin="round"/><path d="M1015.92 591.36L1016.40 556.48L1039.04 567.51L1038.34 603.04Z" fill="url(#g12)" stroke="url(#g12)" stroke-width="1" stroke-linejoin="round"/><path d="M1089.66 676.48L1090.83 642.06L1115.36 655.08L1113.93 690.14Z" fill="url(#g13)" stroke="url(#g13)" stroke-width="1" stroke-linejoin="round"/><path d="M1260.04 563.49L1232.45 571.05L1260.63 582.72L1288.41 574.82Z" fill="url(#g14)" stroke="url(#g14)" stroke-width="1" stroke-linejoin="round"/><path d="M1197.26 685.36L1168.70 694.74L1170.67 659.48L1199.47 650.53Z" fill="url(#g15)" stroke="url(#g15)" stroke-width="1" stroke-linejoin="round"/><path d="M1285.33 610.77L1257.76 619.14L1260.63 582.72L1288.41 574.82Z" fill="url(#g16)" stroke="url(#g16)" stroke-width="1" stroke-linejoin="round"/><path d="M1112.52 724.54L1113.93 690.14L1139.28 704.41L1137.60 739.44Z" fill="#d6d7d3" stroke="#d6d7d3" stroke-width="1" stroke-linejoin="round"/><path d="M1166.77 729.34L1137.60 739.44L1139.28 704.41L1168.70 694.74Z" fill="#eeefea" stroke="#eeefea" stroke-width="1" stroke-linejoin="round"/><path d="M1099.88 517.50L1070.26 524.30L1094.49 534.79L1124.40 527.69Z" fill="url(#g17)" stroke="url(#g17)" stroke-width="1" stroke-linejoin="round"/><path d="M1207.75 524.14L1179.32 531.14L1206.36 541.94L1235.03 534.63Z" fill="url(#g18)" stroke="url(#g18)" stroke-width="1" stroke-linejoin="round"/><path d="M1113.93 690.14L1115.36 655.08L1140.99 668.70L1139.28 704.41Z" fill="url(#g19)" stroke="url(#g19)" stroke-width="1" stroke-linejoin="round"/><path d="M1155.22 484.62L1125.93 491.03L1151.84 500.96L1181.39 494.24Z" fill="#c1318f" stroke="#c1318f" stroke-width="1" stroke-linejoin="round"/><path d="M1168.70 694.74L1139.28 704.41L1140.99 668.70L1170.67 659.48Z" fill="url(#g20)" stroke="url(#g20)" stroke-width="1" stroke-linejoin="round"/><path d="M1007.08 646.48L1007.49 611.18L1030.57 623.74L1029.93 659.71Z" fill="#a3287a" stroke="#a3287a" stroke-width="1" stroke-linejoin="round"/><path d="M1070.26 524.30L1039.75 531.30L1063.66 542.11L1094.49 534.79Z" fill="url(#g21)" stroke="url(#g21)" stroke-width="1" stroke-linejoin="round"/><path d="M1039.04 567.51L1039.75 531.30L1063.66 542.11L1062.70 579.03Z" fill="url(#g22)" stroke="url(#g22)" stroke-width="1" stroke-linejoin="round"/><path d="M1235.03 534.63L1206.36 541.94L1234.66 553.24L1263.54 545.59Z" fill="url(#g23)" stroke="url(#g23)" stroke-width="1" stroke-linejoin="round"/><path d="M1283.73 668.46L1255.36 677.96L1258.28 641.09L1286.89 632.06Z" fill="#b32d86" stroke="#b32d86" stroke-width="1" stroke-linejoin="round"/><path d="M1039.04 567.51L1007.90 575.19L1031.22 587.06L1062.70 579.03Z" fill="url(#g24)" stroke="url(#g24)" stroke-width="1" stroke-linejoin="round"/><path d="M1007.49 611.18L1007.90 575.19L1031.22 587.06L1030.57 623.74Z" fill="#d5bf45" stroke="#d5bf45" stroke-width="1" stroke-linejoin="round"/><path d="M1260.63 582.72L1231.98 590.87L1234.66 553.24L1263.54 545.59Z" fill="url(#g25)" stroke="url(#g25)" stroke-width="1" stroke-linejoin="round"/><path d="M1125.93 491.03L1095.75 497.65L1121.36 507.87L1151.84 500.96Z" fill="#c1318f" stroke="#c1318f" stroke-width="1" stroke-linejoin="round"/><path d="M1260.63 582.72L1231.98 590.87L1261.26 603.47L1290.10 594.94Z" fill="url(#g26)" stroke="url(#g26)" stroke-width="1" stroke-linejoin="round"/><path d="M1181.39 494.24L1151.84 500.96L1178.94 511.34L1208.75 504.31Z" fill="#c1318f" stroke="#c1318f" stroke-width="1" stroke-linejoin="round"/><path d="M1094.49 534.79L1095.75 497.65L1121.36 507.87L1119.82 545.77Z" fill="url(#g27)" stroke="url(#g27)" stroke-width="1" stroke-linejoin="round"/><path d="M1286.89 632.06L1258.28 641.09L1261.26 603.47L1290.10 594.94Z" fill="#b32d86" stroke="#b32d86" stroke-width="1" stroke-linejoin="round"/><path d="M1029.93 659.71L1030.57 623.74L1054.71 636.88L1053.82 673.55Z" fill="#a3287a" stroke="#a3287a" stroke-width="1" stroke-linejoin="round"/><path d="M1206.36 541.94L1176.81 549.48L1178.94 511.34L1208.75 504.31Z" fill="url(#g28)" stroke="url(#g28)" stroke-width="1" stroke-linejoin="round"/><path d="M1094.49 534.79L1063.66 542.11L1088.67 553.42L1119.82 545.77Z" fill="url(#g29)" stroke="url(#g29)" stroke-width="1" stroke-linejoin="round"/><path d="M1062.70 579.03L1063.66 542.11L1088.67 553.42L1087.44 591.07Z" fill="url(#g30)" stroke="url(#g30)" stroke-width="1" stroke-linejoin="round"/><path d="M1206.36 541.94L1176.81 549.48L1204.86 561.13L1234.66 553.24Z" fill="url(#g31)" stroke="url(#g31)" stroke-width="1" stroke-linejoin="round"/><path d="M1255.36 677.96L1226.09 687.76L1228.76 650.40L1258.28 641.09Z" fill="#b32d86" stroke="#b32d86" stroke-width="1" stroke-linejoin="round"/><path d="M1062.70 579.03L1031.22 587.06L1055.62 599.48L1087.44 591.07Z" fill="url(#g32)" stroke="url(#g32)" stroke-width="1" stroke-linejoin="round"/><path d="M1231.98 590.87L1202.44 599.27L1204.86 561.13L1234.66 553.24Z" fill="url(#g33)" stroke="url(#g33)" stroke-width="1" stroke-linejoin="round"/><path d="M1030.57 623.74L1031.22 587.06L1055.62 599.48L1054.71 636.88Z" fill="#a3287a" stroke="#a3287a" stroke-width="1" stroke-linejoin="round"/><path d="M1151.84 500.96L1121.36 507.87L1148.18 518.58L1178.94 511.34Z" fill="#f9dd4f" stroke="#f9dd4f" stroke-width="1" stroke-linejoin="round"/><path d="M1231.98 590.87L1202.44 599.27L1231.48 612.27L1261.26 603.47Z" fill="url(#g34)" stroke="url(#g34)" stroke-width="1" stroke-linejoin="round"/><path d="M1258.28 641.09L1228.76 650.40L1231.48 612.27L1261.26 603.47Z" fill="#ecd14c" stroke="#ecd14c" stroke-width="1" stroke-linejoin="round"/><path d="M1119.82 545.77L1121.36 507.87L1148.18 518.58L1146.33 557.25Z" fill="url(#g35)" stroke="url(#g35)" stroke-width="1" stroke-linejoin="round"/><path d="M1176.81 549.48L1146.33 557.25L1148.18 518.58L1178.94 511.34Z" fill="url(#g36)" stroke="url(#g36)" stroke-width="1" stroke-linejoin="round"/><path d="M1053.82 673.55L1054.71 636.88L1079.99 650.65L1078.82 688.02Z" fill="#a3287a" stroke="#a3287a" stroke-width="1" stroke-linejoin="round"/><path d="M1119.82 545.77L1088.67 553.42L1114.87 565.27L1146.33 557.25Z" fill="url(#g37)" stroke="url(#g37)" stroke-width="1" stroke-linejoin="round"/><path d="M1176.81 549.48L1146.33 557.25L1174.10 569.28L1204.86 561.13Z" fill="url(#g38)" stroke="url(#g38)" stroke-width="1" stroke-linejoin="round"/><path d="M1226.09 687.76L1195.89 697.88L1198.29 660.02L1228.76 650.40Z" fill="#b32d86" stroke="#b32d86" stroke-width="1" stroke-linejoin="round"/><path d="M1087.44 591.07L1088.67 553.42L1114.87 565.27L1113.35 603.68Z" fill="url(#g39)" stroke="url(#g39)" stroke-width="1" stroke-linejoin="round"/><path d="M1202.44 599.27L1171.96 607.95L1174.10 569.28L1204.86 561.13Z" fill="url(#g40)" stroke="url(#g40)" stroke-width="1" stroke-linejoin="round"/><path d="M1087.44 591.07L1055.62 599.48L1081.18 612.50L1113.35 603.68Z" fill="url(#g41)" stroke="url(#g41)" stroke-width="1" stroke-linejoin="round"/><path d="M1054.71 636.88L1055.62 599.48L1081.18 612.50L1079.99 650.65Z" fill="#a3287a" stroke="#a3287a" stroke-width="1" stroke-linejoin="round"/><path d="M1202.44 599.27L1171.96 607.95L1200.74 621.37L1231.48 612.27Z" fill="url(#g42)" stroke="url(#g42)" stroke-width="1" stroke-linejoin="round"/><path d="M1228.76 650.40L1198.29 660.02L1200.74 621.37L1231.48 612.27Z" fill="#b32d86" stroke="#b32d86" stroke-width="1" stroke-linejoin="round"/><path d="M1078.82 688.02L1079.99 650.65L1106.49 665.07L1105.02 703.19Z" fill="#d5bf45" stroke="#d5bf45" stroke-width="1" stroke-linejoin="round"/><path d="M1136.91 692.91L1105.02 703.19L1106.49 665.07L1138.68 655.30Z" fill="url(#g43)" stroke="url(#g43)" stroke-width="1" stroke-linejoin="round"/><path d="M1146.33 557.25L1114.87 565.27L1142.34 577.69L1174.10 569.28Z" fill="url(#g44)" stroke="url(#g44)" stroke-width="1" stroke-linejoin="round"/><path d="M1136.91 692.91L1138.68 655.30L1166.82 669.95L1164.71 708.32Z" fill="url(#g45)" stroke="url(#g45)" stroke-width="1" stroke-linejoin="round"/><path d="M1195.89 697.88L1164.71 708.32L1166.82 669.95L1198.29 660.02Z" fill="#b32d86" stroke="#b32d86" stroke-width="1" stroke-linejoin="round"/><path d="M1113.35 603.68L1114.87 565.27L1142.34 577.69L1140.49 616.90Z" fill="url(#g46)" stroke="url(#g46)" stroke-width="1" stroke-linejoin="round"/><path d="M1171.96 607.95L1140.49 616.90L1142.34 577.69L1174.10 569.28Z" fill="url(#g47)" stroke="url(#g47)" stroke-width="1" stroke-linejoin="round"/><path d="M1113.35 603.68L1081.18 612.50L1107.99 626.15L1140.49 616.90Z" fill="url(#g48)" stroke="url(#g48)" stroke-width="1" stroke-linejoin="round"/><path d="M1171.96 607.95L1140.49 616.90L1168.97 630.76L1200.74 621.37Z" fill="url(#g49)" stroke="url(#g49)" stroke-width="1" stroke-linejoin="round"/><path d="M1079.99 650.65L1081.18 612.50L1107.99 626.15L1106.49 665.07Z" fill="#a3287a" stroke="#a3287a" stroke-width="1" stroke-linejoin="round"/><path d="M1138.68 655.30L1106.49 665.07L1107.99 626.15L1140.49 616.90Z" fill="url(#g50)" stroke="url(#g50)" stroke-width="1" stroke-linejoin="round"/><path d="M1138.68 655.30L1140.49 616.90L1168.97 630.76L1166.82 669.95Z" fill="url(#g51)" stroke="url(#g51)" stroke-width="1" stroke-linejoin="round"/><path d="M1198.29 660.02L1166.82 669.95L1168.97 630.76L1200.74 621.37Z" fill="#b32d86" stroke="#b32d86" stroke-width="1" stroke-linejoin="round"/></svg></div></div>
<div style="position:absolute;left:418px;top:90px;width:40px;height:560px;background:#333333;"></div>
<div style="position:absolute;left:418px;top:90px;width:40px;height:40px;background:#415875;"></div>
<div style="position:absolute;left:418px;top:370px;width:40px;height:1px;background:#262626;"></div>
<div style="position:absolute;left:418px;top:410px;width:40px;height:1px;background:#262626;"></div>
<div style="position:absolute;left:418px;top:490px;width:40px;height:1px;background:#262626;"></div>
<div class="t" style="left:433px;top:543.3px;font-size:16px;line-height:16px;letter-spacing:0.9px;color:#dcdcdc;">X</div>
<div class="t" style="left:433px;top:583.3px;font-size:16px;line-height:16px;letter-spacing:0.9px;color:#dcdcdc;">Y</div>
<div class="t" style="left:433.5px;top:623.3px;font-size:16px;line-height:16px;letter-spacing:0.9px;color:#dcdcdc;">Z</div>
<svg style="position:absolute;left:226px;top:86px;overflow:visible;" width="28" height="28" viewBox="0 0 28 28"><path d="M8.3 5.3Q8.3 3.1 10.35 3.1Q12.4 3.1 12.4 5.3V11.2H14.6L15.3 12H17.9L18.6 12.9H21.7L22.8 14V22.8H6.6L3.4 18Q3 16.6 4 15.9Q5.1 15.2 6.1 16.1L8.3 18.6Z" fill="#ececec"/><rect x="12.3" y="16" width="1.3" height="5.6" fill="#415875" opacity="0.75"/><rect x="15.1" y="16" width="1.3" height="5.6" fill="#415875" opacity="0.75"/><rect x="17.9" y="16" width="1.3" height="5.6" fill="#415875" opacity="0.75"/></svg>
<svg style="position:absolute;left:226px;top:126px;overflow:visible;" width="28" height="28" viewBox="0 0 28 28"><path d="M4.9 21.3L6.1 16.7L18 4.8Q18.6 4.2 19.2 4.8L21.4 7Q22 7.6 21.4 8.2L9.5 20.1Z" fill="none" stroke="#c4c4c4" stroke-width="1.35" stroke-linejoin="round"/><path d="M6.6 16.3L10 19.6" stroke="#c4c4c4" stroke-width="1.2"/><path d="M5.5 20.7L7.2 18.9" stroke="#c4c4c4" stroke-width="1"/></svg>
<svg style="position:absolute;left:226px;top:166px;overflow:visible;" width="28" height="28" viewBox="0 0 28 28"><path d="M14.7 4.1L21.4 10.8Q22.1 11.6 21.4 12.3L16.7 17H21.9V19.8H9.6Q8.8 19.8 8.2 19.2L4.5 15.5Q3.8 14.8 4.5 14.1Z" fill="#ececec"/><path d="M10.8 11L14.9 15.1L13.1 16.9H8.9L7 15Z" fill="#2e2e2e"/></svg>
<svg style="position:absolute;left:226px;top:206px;overflow:visible;" width="28" height="28" viewBox="0 0 28 28"><path d="M20.3 3.4Q22.9 2.6 22.9 5.1L15.9 15.4Q15.1 16.2 14.2 15.6L11.6 13.2Q10.9 12.3 11.7 11.5Z" fill="#ececec"/><path d="M9.3 13.2Q10.9 12.8 12.4 14.3L13.4 15.5Q14.4 17.4 12.6 19.5Q10.8 21.6 6.5 21.6H4.3Q3.6 21 4.2 20.1Q5.6 19.4 6 17.5Q6.8 13.8 9.3 13.2Z" fill="#ececec"/></svg>
<svg style="position:absolute;left:226px;top:246px;overflow:visible;" width="28" height="28" viewBox="0 0 28 28"><path d="M17.6 3.8Q19.6 2.4 21.6 3.4Q23.6 4.9 22.8 7.8L18.6 12.3V15.2Q18.2 16.1 17.2 15.7L10.2 8.7Q9.6 7.8 10.5 7.2H13.6Z" fill="#ececec"/><path d="M9.9 10.9L14.9 15.9L8.2 22.6L4.6 23.1L3.1 22L3.5 18.3Z" fill="#ececec"/><path d="M7.2 18.6L12.3 13.5" stroke="#2e2e2e" stroke-width="1.2"/></svg>
<svg style="position:absolute;left:226px;top:286px;overflow:visible;" width="28" height="28" viewBox="0 0 28 28"><path d="M12.1 9.6L19.2 15.3L12 22.3L5.3 15.6Z" fill="none" stroke="#c4c4c4" stroke-width="1.4" stroke-linejoin="round"/><path d="M10.6 10.8V6.2Q10.6 4.2 11.7 4.2Q13 4.2 13 6.2V15" fill="none" stroke="#c4c4c4" stroke-width="1.3"/><path d="M19 15.2Q19.8 16.5 20 17.5Q20.6 19.8 19.8 19.9Q18.8 20 18.9 18.5Z" fill="#c4c4c4"/></svg>
<svg style="position:absolute;left:226px;top:326px;overflow:visible;" width="28" height="28" viewBox="0 0 28 28"><path d="M3.2 6.5Q3.2 4 5.7 4H20.3Q22.8 4 22.8 6.5V23H3.2Z" fill="#ececec"/><path d="M7.6 19.8L8.4 16.5L13.2 11.7L15.7 14.2L10.9 19Z M14.6 10.3L15.9 9Q16.6 8.5 17.3 9.1L18 9.8Q18.6 10.5 18 11.2L16.9 12.5Z" fill="#2e2e2e"/></svg>
<svg style="position:absolute;left:226px;top:366px;overflow:visible;" width="28" height="28" viewBox="0 0 28 28"><g fill="none" stroke="#c4c4c4" stroke-width="1.7" stroke-linejoin="round" stroke-linecap="round"><path d="M10 7.6L12.8 4.6L15.6 7.6M10 17.6L12.8 20.4L15.6 17.6M7.7 9.6L4.9 12.5L7.7 15.4M17.9 9.6L20.7 12.5L17.9 15.4"/><path d="M12.8 6.2V10.6M12.8 14.4V18.8M6.4 12.5H10.8M14.8 12.5H19.2"/></g></svg>
<svg style="position:absolute;left:226px;top:406px;overflow:visible;" width="28" height="28" viewBox="0 0 28 28"><rect x="5.2" y="5.2" width="14.6" height="15.2" rx="1.3" fill="none" stroke="#c4c4c4" stroke-width="1.6"/><path d="M8.2 12.5H16.8M12.5 8.2V16.8" stroke="#c4c4c4" stroke-width="1.4"/></svg>
<svg style="position:absolute;left:226px;top:446px;overflow:visible;" width="28" height="28" viewBox="0 0 28 28"><rect x="5.2" y="5.2" width="14.6" height="15.2" rx="1.3" fill="none" stroke="#c4c4c4" stroke-width="1.6"/><path d="M8.2 12.5H16.8" stroke="#c4c4c4" stroke-width="1.4"/></svg>
<svg style="position:absolute;left:232px;top:486px;overflow:visible;" width="28" height="28" viewBox="0 0 28 28"><g fill="none" stroke="#c4c4c4" stroke-width="1.5" stroke-linecap="round"><path d="M9.3 9.3Q11.4 5.6 15.2 5.6Q20.2 5.8 21.6 11.4"/><path d="M20.6 16.3Q18.8 20.6 14.8 20.6Q10.4 20.4 8.3 14.4"/></g><path d="M19 11.2H24.5L21.7 14.8Z" fill="#c4c4c4"/><path d="M5.2 14.3H10.7L8 10.8Z" fill="#c4c4c4"/></svg>
<svg style="position:absolute;left:425px;top:96px;overflow:visible;" width="28" height="28" viewBox="0 0 28 28"><path d="M8.3 5.3Q8.3 3.1 10.35 3.1Q12.4 3.1 12.4 5.3V11.2H14.6L15.3 12H17.9L18.6 12.9H21.7L22.8 14V22.8H6.6L3.4 18Q3 16.6 4 15.9Q5.1 15.2 6.1 16.1L8.3 18.6Z" fill="#ececec"/><rect x="12.3" y="16" width="1.3" height="5.6" fill="#415875" opacity="0.75"/><rect x="15.1" y="16" width="1.3" height="5.6" fill="#415875" opacity="0.75"/><rect x="17.9" y="16" width="1.3" height="5.6" fill="#415875" opacity="0.75"/></svg>
<svg style="position:absolute;left:425px;top:136px;overflow:visible;" width="28" height="28" viewBox="0 0 28 28"><path d="M4.9 21.3L6.1 16.7L18 4.8Q18.6 4.2 19.2 4.8L21.4 7Q22 7.6 21.4 8.2L9.5 20.1Z" fill="none" stroke="#c4c4c4" stroke-width="1.35" stroke-linejoin="round"/><path d="M6.6 16.3L10 19.6" stroke="#c4c4c4" stroke-width="1.2"/><path d="M5.5 20.7L7.2 18.9" stroke="#c4c4c4" stroke-width="1"/></svg>
<svg style="position:absolute;left:425px;top:176px;overflow:visible;" width="28" height="28" viewBox="0 0 28 28"><path d="M14.7 4.1L21.4 10.8Q22.1 11.6 21.4 12.3L16.7 17H21.9V19.8H9.6Q8.8 19.8 8.2 19.2L4.5 15.5Q3.8 14.8 4.5 14.1Z" fill="#ececec"/><path d="M10.8 11L14.9 15.1L13.1 16.9H8.9L7 15Z" fill="#333333"/></svg>
<svg style="position:absolute;left:425px;top:216px;overflow:visible;" width="28" height="28" viewBox="0 0 28 28"><path d="M20.3 3.4Q22.9 2.6 22.9 5.1L15.9 15.4Q15.1 16.2 14.2 15.6L11.6 13.2Q10.9 12.3 11.7 11.5Z" fill="#ececec"/><path d="M9.3 13.2Q10.9 12.8 12.4 14.3L13.4 15.5Q14.4 17.4 12.6 19.5Q10.8 21.6 6.5 21.6H4.3Q3.6 21 4.2 20.1Q5.6 19.4 6 17.5Q6.8 13.8 9.3 13.2Z" fill="#ececec"/></svg>
<svg style="position:absolute;left:425px;top:256px;overflow:visible;" width="28" height="28" viewBox="0 0 28 28"><path d="M17.6 3.8Q19.6 2.4 21.6 3.4Q23.6 4.9 22.8 7.8L18.6 12.3V15.2Q18.2 16.1 17.2 15.7L10.2 8.7Q9.6 7.8 10.5 7.2H13.6Z" fill="#ececec"/><path d="M9.9 10.9L14.9 15.9L8.2 22.6L4.6 23.1L3.1 22L3.5 18.3Z" fill="#ececec"/><path d="M7.2 18.6L12.3 13.5" stroke="#333333" stroke-width="1.2"/></svg>
<svg style="position:absolute;left:425px;top:296px;overflow:visible;" width="28" height="28" viewBox="0 0 28 28"><path d="M12.1 9.6L19.2 15.3L12 22.3L5.3 15.6Z" fill="none" stroke="#c4c4c4" stroke-width="1.4" stroke-linejoin="round"/><path d="M10.6 10.8V6.2Q10.6 4.2 11.7 4.2Q13 4.2 13 6.2V15" fill="none" stroke="#c4c4c4" stroke-width="1.3"/><path d="M19 15.2Q19.8 16.5 20 17.5Q20.6 19.8 19.8 19.9Q18.8 20 18.9 18.5Z" fill="#c4c4c4"/></svg>
<svg style="position:absolute;left:425px;top:336px;overflow:visible;" width="28" height="28" viewBox="0 0 28 28"><path d="M3.2 6.5Q3.2 4 5.7 4H20.3Q22.8 4 22.8 6.5V23H3.2Z" fill="#ececec"/><path d="M7.6 19.8L8.4 16.5L13.2 11.7L15.7 14.2L10.9 19Z M14.6 10.3L15.9 9Q16.6 8.5 17.3 9.1L18 9.8Q18.6 10.5 18 11.2L16.9 12.5Z" fill="#333333"/></svg>
<svg style="position:absolute;left:425px;top:376px;overflow:visible;" width="28" height="28" viewBox="0 0 28 28"><g fill="none" stroke="#c4c4c4" stroke-width="1.7" stroke-linejoin="round" stroke-linecap="round"><path d="M10 7.6L12.8 4.6L15.6 7.6M10 17.6L12.8 20.4L15.6 17.6M7.7 9.6L4.9 12.5L7.7 15.4M17.9 9.6L20.7 12.5L17.9 15.4"/><path d="M12.8 6.2V10.6M12.8 14.4V18.8M6.4 12.5H10.8M14.8 12.5H19.2"/></g></svg>
<svg style="position:absolute;left:425px;top:416px;overflow:visible;" width="28" height="28" viewBox="0 0 28 28"><rect x="5.2" y="5.2" width="14.6" height="15.2" rx="1.3" fill="none" stroke="#c4c4c4" stroke-width="1.6"/><path d="M8.2 12.5H16.8M12.5 8.2V16.8" stroke="#c4c4c4" stroke-width="1.4"/></svg>
<svg style="position:absolute;left:425px;top:456px;overflow:visible;" width="28" height="28" viewBox="0 0 28 28"><rect x="5.2" y="5.2" width="14.6" height="15.2" rx="1.3" fill="none" stroke="#c4c4c4" stroke-width="1.6"/><path d="M8.2 12.5H16.8" stroke="#c4c4c4" stroke-width="1.4"/></svg>
<svg style="position:absolute;left:423px;top:496px;overflow:visible;" width="28" height="28" viewBox="0 0 28 28"><g fill="none" stroke="#c4c4c4" stroke-width="1.5" stroke-linecap="round"><path d="M9.3 9.3Q11.4 5.6 15.2 5.6Q20.2 5.8 21.6 11.4"/><path d="M20.6 16.3Q18.8 20.6 14.8 20.6Q10.4 20.4 8.3 14.4"/></g><path d="M19 11.2H24.5L21.7 14.8Z" fill="#c4c4c4"/><path d="M5.2 14.3H10.7L8 10.8Z" fill="#c4c4c4"/></svg>
<svg style="position:absolute;left:0px;top:40px;overflow:visible;" width="40" height="40" viewBox="0 0 40 40"><g transform="translate(40 0) scale(-1 1)"><path d="M20 10.2Q28.6 10.2 28.8 18.2Q28.8 22.2 25.5 22.3H23.4Q21.7 22.5 22.6 24.7Q23.5 27 21.2 27.8Q20.1 28.1 18.4 27.6Q11.3 26 11.2 18.6Q11.5 10.3 20 10.2Z" fill="none" stroke="#c4c4c4" stroke-width="1.3"/><g fill="#c4c4c4"><circle cx="15.8" cy="16.4" r="1.1"/><circle cx="19.6" cy="13.6" r="1.1"/><circle cx="23.4" cy="15" r="1.1"/><circle cx="24.6" cy="19" r="1.1"/><circle cx="15.3" cy="21.7" r="1.1"/></g></g></svg>
<svg style="position:absolute;left:0px;top:80px;overflow:visible;" width="40" height="40" viewBox="0 0 40 40"><g fill="none" stroke="#c4c4c4" stroke-width="1.3" stroke-linejoin="round"><path d="M11.6 12.4Q12.4 11.3 13.7 12.1L16.7 15.3L15.3 17.5L12.3 15.1Q11 13.7 11.6 12.4Z"/><rect x="19.4" y="22.9" width="9" height="3.5" rx="1.6" transform="rotate(45 23.9 24.65)"/><rect x="9.6" y="21.2" width="13.4" height="3.3" rx="1.5" transform="rotate(-45 16.3 22.85)"/></g><path d="M28.38 14.25A4.0 4.0 0 1 1 24.75 10.62" fill="none" stroke="#c4c4c4" stroke-width="2.6"/></svg>
<svg style="position:absolute;left:1880px;top:80px;overflow:visible;" width="40" height="40" viewBox="0 0 40 40"><path d="M17.62 10.29L22.38 10.29L22.60 13.50L22.76 13.57L25.19 11.45L28.55 14.81L26.43 17.24L26.50 17.40L29.71 17.62L29.71 22.38L26.50 22.60L26.43 22.76L28.55 25.19L25.19 28.55L22.76 26.43L22.60 26.50L22.38 29.71L17.62 29.71L17.40 26.50L17.24 26.43L14.81 28.55L11.45 25.19L13.57 22.76L13.50 22.60L10.29 22.38L10.29 17.62L13.50 17.40L13.57 17.24L11.45 14.81L14.81 11.45L17.24 13.57L17.40 13.50Z" fill="none" stroke="#c4c4c4" stroke-width="1.4" stroke-linejoin="round"/><circle cx="20" cy="20" r="2.4" fill="none" stroke="#c4c4c4" stroke-width="1.4"/></svg>
<svg style="position:absolute;left:1880px;top:120px;overflow:visible;" width="40" height="40" viewBox="0 0 40 40"><path d="M13.6 13.2Q15.6 10.5 20 10.3Q27.3 10.6 27.6 19.2Q27.3 26.8 20 27Q15.4 27 13 23" fill="none" stroke="#c4c4c4" stroke-width="1.4"/><path d="M11.2 11.2V16.2H16.2Z" fill="#c4c4c4"/><path d="M19.7 14.5V19.5L23.2 22.8" fill="none" stroke="#c4c4c4" stroke-width="1.4"/></svg>
<svg style="position:absolute;left:1880px;top:160px;overflow:visible;" width="40" height="40" viewBox="0 0 40 40"><g fill="none" stroke="#c4c4c4" stroke-width="1.3"><circle cx="20" cy="19.5" r="8"/><ellipse cx="20" cy="19.5" rx="3.2" ry="8"/><path d="M12.6 16.5H27.4M12.6 22.5H27.4"/></g></svg>
<svg style="position:absolute;left:1880px;top:200px;overflow:visible;" width="40" height="40" viewBox="0 0 40 40"><g stroke="#c4c4c4" stroke-width="1.5"><path d="M14 11V27M20 11V27M26 11V27"/></g><g fill="#c4c4c4"><rect x="11.3" y="20" width="5.4" height="2.6" rx="1"/><rect x="17.3" y="15.5" width="5.4" height="2.6" rx="1"/><rect x="23.3" y="20.2" width="5.4" height="2.6" rx="1"/></g></svg>
<svg style="position:absolute;left:1880px;top:240px;overflow:visible;" width="40" height="40" viewBox="0 0 40 40"><g fill="none" stroke="#c4c4c4" stroke-width="1.3"><path d="M16.4 15.2Q16.4 11.6 20 11.6Q23.6 11.6 23.6 15.2"/><path d="M14.2 15.4H25.8V22.5Q25.8 27.2 20 27.2Q14.2 27.2 14.2 22.5Z"/><path d="M17.3 17.8L22.7 23.8M22.7 17.8L17.3 23.8M10.6 20.7H14.2M25.8 20.7H29.4M11.6 13.4L14.6 15.8M28.4 13.4L25.4 15.8M11.8 28.2L14.8 25.2M28.2 28.2L25.2 25.2"/></g></svg>
<svg style="position:absolute;left:1880px;top:40px;overflow:visible;" width="40" height="40" viewBox="0 0 40 40"><path d="M11.5 11.8H16.6L18 13.6H28.5V26.6H11.5Z M11.5 15.6H28.5" fill="none" stroke="#c4c4c4" stroke-width="1.4" stroke-linejoin="round"/></svg>
<svg style="position:absolute;left:660px;top:48px;overflow:visible;" width="22" height="20" viewBox="0 0 22 20"><path d="M6.4 8.2H12.8Q16.7 8.2 16.7 11.6Q16.7 15 12.8 15H9.4" fill="none" stroke="#c4c4c4" stroke-width="1.6"/><path d="M4.6 8.2L8.2 4.8V11.6Z" fill="#c4c4c4"/></svg>
<svg style="position:absolute;left:700px;top:48px;overflow:visible;" width="22" height="20" viewBox="0 0 22 20"><path d="M15 8.2H8.6Q4.7 8.2 4.7 11.6Q4.7 15 8.6 15H12" fill="none" stroke="#c4c4c4" stroke-width="1.6"/><path d="M16.8 8.2L13.2 4.8V11.6Z" fill="#c4c4c4"/></svg>
<svg style="position:absolute;left:0px;top:0px;overflow:visible;" width="50" height="40" viewBox="0 0 50 40"><path d="M25 10.3L32.6 14.6V23.4L25 27.8L17.4 23.4V14.6Z" fill="#e8a33a"/><path d="M25 10.3L32.6 14.6L25 19L17.4 14.6Z" fill="#f5c05a"/><path d="M25 19V27.8L17.4 23.4V14.6Z" fill="#e9b04a"/><path d="M25 19L32.6 14.6V23.4L25 27.8Z" fill="#d98e2c"/></svg>
<svg style="position:absolute;left:0px;top:0px;overflow:visible;" width="1920" height="40" viewBox="0 0 1920 40"><path d="M1801.8 19.6H1815.6" stroke="#c4c4c4" stroke-width="1.3"/><g fill="none" stroke="#c4c4c4" stroke-width="1.2"><path d="M1848.6 15.2V13.6Q1848.6 12.8 1849.4 12.8H1859.6Q1860.4 12.8 1860.4 13.6V22.6Q1860.4 23.4 1859.6 23.4H1857.6"/><rect x="1846.4" y="15.8" width="11.2" height="10.4" rx="0.8"/></g><path d="M1891.6 12.6L1904.8 26M1904.8 12.6L1891.6 26" stroke="#c4c4c4" stroke-width="1.3"/></svg>
<svg style="position:absolute;left:872.2px;top:1050.3px;overflow:visible;" width="13" height="19" viewBox="0 0 13 19"><path d="M5.2 9.5H1.2V16Q1.2 17.6 4 17.6H8.6Q11.6 17.6 11.6 14.6V4Q11.6 1 8.6 1H6.6" fill="none" stroke="#ececec" stroke-width="1.7"/><path d="M0.3 8.3V3.8Q0.3 0.3 3.8 0.3H5.3V8.3Z" fill="#ececec"/></svg>
<svg style="position:absolute;left:952.1px;top:1050.3px;overflow:visible;" width="13" height="19" viewBox="0 0 13 19"><rect x="1" y="1" width="10.6" height="16.4" rx="3" fill="none" stroke="#ececec" stroke-width="1.7"/><rect x="4.8" y="4" width="3" height="4.8" rx="0.6" fill="#ececec"/></svg>
<svg style="position:absolute;left:1014.2px;top:1050.3px;overflow:visible;" width="13" height="19" viewBox="0 0 13 19"><rect x="1" y="1" width="10.6" height="16.4" rx="3" fill="none" stroke="#ececec" stroke-width="1.7"/><path d="M3.8 8L6.3 5L8.8 8Z M3.8 10.2L6.3 13.2L8.8 10.2Z" fill="#ececec"/></svg>
<svg style="position:absolute;left:1089.5px;top:1050.3px;overflow:visible;" width="13" height="19" viewBox="0 0 13 19"><path d="M7.2 9.5H11.2V16Q11.2 17.6 8.4 17.6H3.8Q0.8 17.6 0.8 14.6V4Q0.8 1 3.8 1H5.8" fill="none" stroke="#ececec" stroke-width="1.7"/><path d="M12.1 8.3V3.8Q12.1 0.3 8.6 0.3H7.1V8.3Z" fill="#ececec"/></svg>
</body></html>
